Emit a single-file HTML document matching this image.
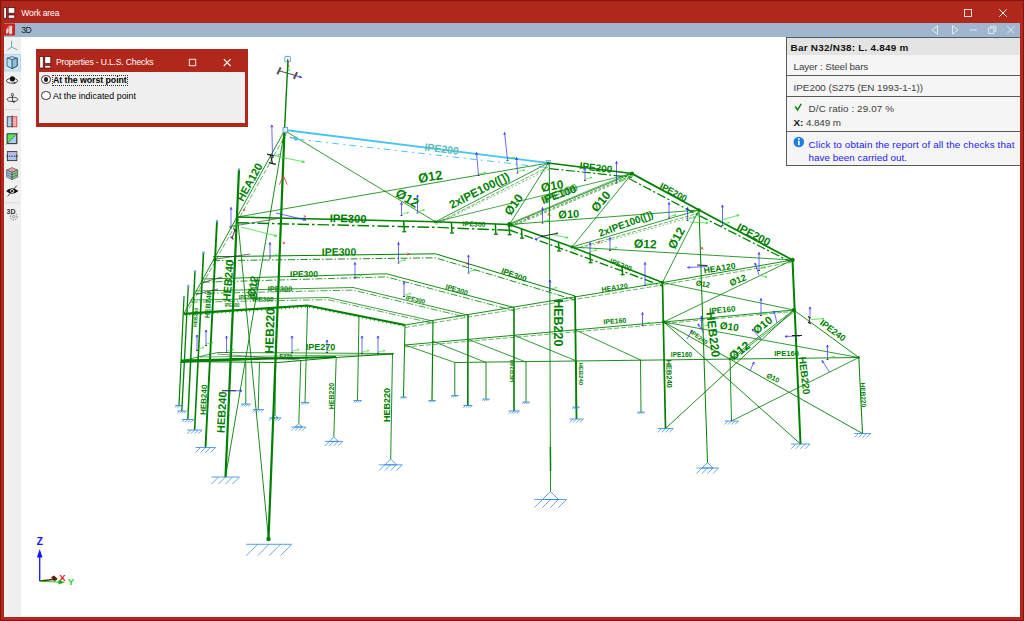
<!DOCTYPE html>
<html><head><meta charset="utf-8"><title>Work area</title>
<style>
html,body{margin:0;padding:0;}
body{width:1024px;height:621px;overflow:hidden;background:#b0271b;position:relative;font-family:"Liberation Sans",sans-serif;color:#000;}
.abs{position:absolute;}
#frame{left:0;top:0;width:1022px;height:619px;border:1px solid #8a120c;background:#b0271b;}
#title{left:1px;top:1px;width:1022px;height:22px;background:#b0271b;color:#fff;}
#title .t{left:20.3px;top:5.6px;font-size:8.6px;line-height:12px;white-space:nowrap;letter-spacing:-0.165px;}
#bar{left:3.7px;top:22.5px;width:1016.5px;height:14.5px;background:#9fb6ce;}
#bar .t{left:17.6px;top:1.7px;font-size:8.6px;line-height:12px;color:#1a1a1a;letter-spacing:-0.5px;}
#tool{left:3.7px;top:37px;width:17px;height:580px;background:#f0f0f0;}
#canvas{left:21px;top:37px;width:999px;height:580px;background:#fff;}
svg{position:absolute;left:0;top:0;}
#dlg{left:35.7px;top:49.3px;width:212.8px;height:77.5px;background:#b0271b;}
#dlg .c{left:3px;top:23px;width:206px;height:51px;background:#f0f0f0;}
#dlg .t{left:20.3px;top:7.1px;color:#fff;font-size:8.6px;line-height:12px;white-space:nowrap;letter-spacing:-0.163px;}
.rb{width:7.6px;height:7.6px;border:1px solid #333;border-radius:50%;background:#fff;}
.lbl{font-size:8.8px;line-height:12px;white-space:nowrap;}
#info{left:786px;top:37px;width:234px;height:129px;background:#f5f5f5;border-left:1px solid #5a5a5a;border-top:1px solid #5a5a5a;border-bottom:1px solid #5a5a5a;box-sizing:border-box;}
#info .h{left:0;top:0;width:233px;height:17px;background:#e4e4e4;}
#info .sep{left:0;width:233px;height:1px;background:#5a5a5a;}
#info .t{font-size:9.9px;line-height:12px;white-space:nowrap;color:#404040;}
</style></head><body>
<div id="frame" class="abs"></div>
<div id="title" class="abs"><div class="t abs" id="tt">Work area</div></div>
<div id="bar" class="abs"><div class="t abs">3D</div></div>
<div id="tool" class="abs"></div>
<div id="canvas" class="abs"></div>
<svg width="1024" height="621" viewBox="0 0 1024 621" font-family="Liberation Sans, sans-serif">
<polyline points="213.0,256.7 435.5,253.8 575.0,296.0" fill="none" stroke="#008000" stroke-width="1.0"/>
<polyline points="213.0,260.7 435.5,257.8 575.0,300.0" fill="none" stroke="#008000" stroke-width="0.9" stroke-dasharray="7 2 1.5 2"/>
<polyline points="203.0,279.0 386.5,273.8 514.0,307.5" fill="none" stroke="#008000" stroke-width="0.9"/>
<polyline points="203.0,282.2 386.5,276.9 514.0,310.7" fill="none" stroke="#008000" stroke-width="0.81" stroke-dasharray="7 2 1.5 2"/>
<polyline points="195.5,291.0 353.0,287.5 467.8,315.0" fill="none" stroke="#008000" stroke-width="0.8"/>
<polyline points="195.5,293.6 353.0,290.1 467.8,317.6" fill="none" stroke="#008000" stroke-width="0.7200000000000001" stroke-dasharray="7 2 1.5 2"/>
<polyline points="190.5,300.0 328.0,297.5 432.8,321.0" fill="none" stroke="#008000" stroke-width="0.75"/>
<polyline points="190.5,302.2 328.0,299.7 432.8,323.2" fill="none" stroke="#008000" stroke-width="0.675" stroke-dasharray="7 2 1.5 2"/>
<polyline points="183.8,313.8 307.5,305.5 405.0,325.0" fill="none" stroke="#008000" stroke-width="2.2"/>
<line x1="185.7" y1="313.6" x2="185.7" y2="315.8" stroke="#008000" stroke-width="0.7"/>
<line x1="189.7" y1="313.4" x2="189.7" y2="315.6" stroke="#008000" stroke-width="0.7"/>
<line x1="193.7" y1="313.1" x2="193.7" y2="315.3" stroke="#008000" stroke-width="0.7"/>
<line x1="197.7" y1="312.8" x2="197.7" y2="315.0" stroke="#008000" stroke-width="0.7"/>
<line x1="201.7" y1="312.6" x2="201.7" y2="314.8" stroke="#008000" stroke-width="0.7"/>
<line x1="205.7" y1="312.3" x2="205.7" y2="314.5" stroke="#008000" stroke-width="0.7"/>
<line x1="209.7" y1="312.0" x2="209.7" y2="314.2" stroke="#008000" stroke-width="0.7"/>
<line x1="213.7" y1="311.8" x2="213.7" y2="314.0" stroke="#008000" stroke-width="0.7"/>
<line x1="217.7" y1="311.5" x2="217.7" y2="313.7" stroke="#008000" stroke-width="0.7"/>
<line x1="221.7" y1="311.2" x2="221.7" y2="313.4" stroke="#008000" stroke-width="0.7"/>
<line x1="225.7" y1="311.0" x2="225.7" y2="313.2" stroke="#008000" stroke-width="0.7"/>
<line x1="229.7" y1="310.7" x2="229.7" y2="312.9" stroke="#008000" stroke-width="0.7"/>
<line x1="233.6" y1="310.4" x2="233.6" y2="312.6" stroke="#008000" stroke-width="0.7"/>
<line x1="237.6" y1="310.2" x2="237.6" y2="312.4" stroke="#008000" stroke-width="0.7"/>
<line x1="241.6" y1="309.9" x2="241.6" y2="312.1" stroke="#008000" stroke-width="0.7"/>
<line x1="245.6" y1="309.6" x2="245.6" y2="311.8" stroke="#008000" stroke-width="0.7"/>
<line x1="249.6" y1="309.4" x2="249.6" y2="311.6" stroke="#008000" stroke-width="0.7"/>
<line x1="253.6" y1="309.1" x2="253.6" y2="311.3" stroke="#008000" stroke-width="0.7"/>
<line x1="257.6" y1="308.8" x2="257.6" y2="311.0" stroke="#008000" stroke-width="0.7"/>
<line x1="261.6" y1="308.6" x2="261.6" y2="310.8" stroke="#008000" stroke-width="0.7"/>
<line x1="265.6" y1="308.3" x2="265.6" y2="310.5" stroke="#008000" stroke-width="0.7"/>
<line x1="269.6" y1="308.0" x2="269.6" y2="310.2" stroke="#008000" stroke-width="0.7"/>
<line x1="273.6" y1="307.8" x2="273.6" y2="310.0" stroke="#008000" stroke-width="0.7"/>
<line x1="277.6" y1="307.5" x2="277.6" y2="309.7" stroke="#008000" stroke-width="0.7"/>
<line x1="281.6" y1="307.2" x2="281.6" y2="309.4" stroke="#008000" stroke-width="0.7"/>
<line x1="285.5" y1="307.0" x2="285.5" y2="309.2" stroke="#008000" stroke-width="0.7"/>
<line x1="289.5" y1="306.7" x2="289.5" y2="308.9" stroke="#008000" stroke-width="0.7"/>
<line x1="293.5" y1="306.4" x2="293.5" y2="308.6" stroke="#008000" stroke-width="0.7"/>
<line x1="297.5" y1="306.2" x2="297.5" y2="308.4" stroke="#008000" stroke-width="0.7"/>
<line x1="301.5" y1="305.9" x2="301.5" y2="308.1" stroke="#008000" stroke-width="0.7"/>
<line x1="305.5" y1="305.6" x2="305.5" y2="307.8" stroke="#008000" stroke-width="0.7"/>
<line x1="309.5" y1="305.9" x2="309.5" y2="308.1" stroke="#008000" stroke-width="0.7"/>
<line x1="313.6" y1="306.7" x2="313.6" y2="308.9" stroke="#008000" stroke-width="0.7"/>
<line x1="317.7" y1="307.5" x2="317.7" y2="309.7" stroke="#008000" stroke-width="0.7"/>
<line x1="321.7" y1="308.3" x2="321.7" y2="310.5" stroke="#008000" stroke-width="0.7"/>
<line x1="325.8" y1="309.2" x2="325.8" y2="311.4" stroke="#008000" stroke-width="0.7"/>
<line x1="329.8" y1="310.0" x2="329.8" y2="312.2" stroke="#008000" stroke-width="0.7"/>
<line x1="333.9" y1="310.8" x2="333.9" y2="313.0" stroke="#008000" stroke-width="0.7"/>
<line x1="338.0" y1="311.6" x2="338.0" y2="313.8" stroke="#008000" stroke-width="0.7"/>
<line x1="342.0" y1="312.4" x2="342.0" y2="314.6" stroke="#008000" stroke-width="0.7"/>
<line x1="346.1" y1="313.2" x2="346.1" y2="315.4" stroke="#008000" stroke-width="0.7"/>
<line x1="350.2" y1="314.0" x2="350.2" y2="316.2" stroke="#008000" stroke-width="0.7"/>
<line x1="354.2" y1="314.8" x2="354.2" y2="317.0" stroke="#008000" stroke-width="0.7"/>
<line x1="358.3" y1="315.7" x2="358.3" y2="317.9" stroke="#008000" stroke-width="0.7"/>
<line x1="362.3" y1="316.5" x2="362.3" y2="318.7" stroke="#008000" stroke-width="0.7"/>
<line x1="366.4" y1="317.3" x2="366.4" y2="319.5" stroke="#008000" stroke-width="0.7"/>
<line x1="370.5" y1="318.1" x2="370.5" y2="320.3" stroke="#008000" stroke-width="0.7"/>
<line x1="374.5" y1="318.9" x2="374.5" y2="321.1" stroke="#008000" stroke-width="0.7"/>
<line x1="378.6" y1="319.7" x2="378.6" y2="321.9" stroke="#008000" stroke-width="0.7"/>
<line x1="382.7" y1="320.5" x2="382.7" y2="322.7" stroke="#008000" stroke-width="0.7"/>
<line x1="386.7" y1="321.3" x2="386.7" y2="323.5" stroke="#008000" stroke-width="0.7"/>
<line x1="390.8" y1="322.2" x2="390.8" y2="324.4" stroke="#008000" stroke-width="0.7"/>
<line x1="394.8" y1="323.0" x2="394.8" y2="325.2" stroke="#008000" stroke-width="0.7"/>
<line x1="398.9" y1="323.8" x2="398.9" y2="326.0" stroke="#008000" stroke-width="0.7"/>
<line x1="403.0" y1="324.6" x2="403.0" y2="326.8" stroke="#008000" stroke-width="0.7"/>
<line x1="405.0" y1="325.0" x2="662.5" y2="282.5" stroke="#008000" stroke-width="0.9"/>
<line x1="405.0" y1="327.5" x2="662.5" y2="285.0" stroke="#008000" stroke-width="0.6" stroke-dasharray="5 2"/>
<line x1="405.0" y1="345.0" x2="663.8" y2="322.0" stroke="#008000" stroke-width="0.9"/>
<line x1="405.0" y1="347.0" x2="663.8" y2="324.0" stroke="#008000" stroke-width="0.6" stroke-dasharray="5 2"/>
<line x1="284.5" y1="130.5" x2="183.8" y2="313.8" stroke="#008000" stroke-width="0.9"/>
<line x1="286.5" y1="133.0" x2="186.0" y2="314.0" stroke="#008000" stroke-width="0.6" stroke-dasharray="5 2"/>
<line x1="405.0" y1="325.0" x2="403.5" y2="397.0" stroke="#008000" stroke-width="1.0"/>
<line x1="400.5" y1="397.0" x2="406.5" y2="397.0" stroke="#2f86de" stroke-width="0.8"/>
<line x1="402.0" y1="397.0" x2="400.5" y2="398.5" stroke="#2f86de" stroke-width="0.7200000000000001"/>
<line x1="403.5" y1="397.0" x2="402.0" y2="398.5" stroke="#2f86de" stroke-width="0.7200000000000001"/>
<line x1="405.0" y1="397.0" x2="403.5" y2="398.5" stroke="#2f86de" stroke-width="0.7200000000000001"/>
<line x1="406.5" y1="397.0" x2="405.0" y2="398.5" stroke="#2f86de" stroke-width="0.7200000000000001"/>
<line x1="433.0" y1="321.0" x2="432.0" y2="400.5" stroke="#008000" stroke-width="1.2"/>
<line x1="428.4" y1="400.5" x2="435.6" y2="400.5" stroke="#2f86de" stroke-width="0.8"/>
<line x1="430.2" y1="400.5" x2="428.4" y2="402.3" stroke="#2f86de" stroke-width="0.7200000000000001"/>
<line x1="432.0" y1="400.5" x2="430.2" y2="402.3" stroke="#2f86de" stroke-width="0.7200000000000001"/>
<line x1="433.8" y1="400.5" x2="432.0" y2="402.3" stroke="#2f86de" stroke-width="0.7200000000000001"/>
<line x1="435.6" y1="400.5" x2="433.8" y2="402.3" stroke="#2f86de" stroke-width="0.7200000000000001"/>
<line x1="468.0" y1="315.0" x2="467.8" y2="405.5" stroke="#008000" stroke-width="1.6"/>
<line x1="463.3" y1="405.5" x2="472.2" y2="405.5" stroke="#2f86de" stroke-width="0.8"/>
<line x1="465.5" y1="405.5" x2="463.3" y2="407.7" stroke="#2f86de" stroke-width="0.7200000000000001"/>
<line x1="467.8" y1="405.5" x2="465.5" y2="407.7" stroke="#2f86de" stroke-width="0.7200000000000001"/>
<line x1="470.0" y1="405.5" x2="467.8" y2="407.7" stroke="#2f86de" stroke-width="0.7200000000000001"/>
<line x1="472.2" y1="405.5" x2="470.0" y2="407.7" stroke="#2f86de" stroke-width="0.7200000000000001"/>
<line x1="514.0" y1="307.5" x2="514.0" y2="411.0" stroke="#008000" stroke-width="1.6"/>
<line x1="508.6" y1="411.0" x2="519.5" y2="411.0" stroke="#2f86de" stroke-width="0.8"/>
<line x1="511.3" y1="411.0" x2="508.6" y2="413.7" stroke="#2f86de" stroke-width="0.7200000000000001"/>
<line x1="514.0" y1="411.0" x2="511.3" y2="413.7" stroke="#2f86de" stroke-width="0.7200000000000001"/>
<line x1="516.7" y1="411.0" x2="514.0" y2="413.7" stroke="#2f86de" stroke-width="0.7200000000000001"/>
<line x1="519.5" y1="411.0" x2="516.7" y2="413.7" stroke="#2f86de" stroke-width="0.7200000000000001"/>
<line x1="575.0" y1="296.0" x2="576.5" y2="419.0" stroke="#008000" stroke-width="1.8"/>
<line x1="569.6" y1="419.0" x2="583.4" y2="419.0" stroke="#2f86de" stroke-width="0.8"/>
<line x1="573.1" y1="419.0" x2="569.6" y2="422.4" stroke="#2f86de" stroke-width="0.7200000000000001"/>
<line x1="576.5" y1="419.0" x2="573.1" y2="422.4" stroke="#2f86de" stroke-width="0.7200000000000001"/>
<line x1="579.9" y1="419.0" x2="576.5" y2="422.4" stroke="#2f86de" stroke-width="0.7200000000000001"/>
<line x1="583.4" y1="419.0" x2="579.9" y2="422.4" stroke="#2f86de" stroke-width="0.7200000000000001"/>
<line x1="405.0" y1="345.0" x2="455.0" y2="362.5" stroke="#008000" stroke-width="0.8"/>
<line x1="432.8" y1="341.2" x2="486.0" y2="362.5" stroke="#008000" stroke-width="0.8"/>
<line x1="468.5" y1="339.5" x2="526.0" y2="362.0" stroke="#008000" stroke-width="0.8"/>
<line x1="514.0" y1="335.3" x2="576.5" y2="361.0" stroke="#008000" stroke-width="0.8"/>
<line x1="575.5" y1="330.0" x2="641.5" y2="360.4" stroke="#008000" stroke-width="0.8"/>
<line x1="455.0" y1="362.5" x2="858.8" y2="357.5" stroke="#008000" stroke-width="0.9"/>
<line x1="454.8" y1="362.5" x2="454.8" y2="395.5" stroke="#008000" stroke-width="0.9"/>
<line x1="451.2" y1="395.5" x2="458.2" y2="395.5" stroke="#2f86de" stroke-width="0.8"/>
<line x1="453.0" y1="395.5" x2="451.2" y2="397.2" stroke="#2f86de" stroke-width="0.7200000000000001"/>
<line x1="454.8" y1="395.5" x2="453.0" y2="397.2" stroke="#2f86de" stroke-width="0.7200000000000001"/>
<line x1="456.5" y1="395.5" x2="454.8" y2="397.2" stroke="#2f86de" stroke-width="0.7200000000000001"/>
<line x1="458.2" y1="395.5" x2="456.5" y2="397.2" stroke="#2f86de" stroke-width="0.7200000000000001"/>
<line x1="486.0" y1="362.5" x2="486.0" y2="399.0" stroke="#008000" stroke-width="0.9"/>
<line x1="482.5" y1="399.0" x2="489.5" y2="399.0" stroke="#2f86de" stroke-width="0.8"/>
<line x1="484.2" y1="399.0" x2="482.5" y2="400.8" stroke="#2f86de" stroke-width="0.7200000000000001"/>
<line x1="486.0" y1="399.0" x2="484.2" y2="400.8" stroke="#2f86de" stroke-width="0.7200000000000001"/>
<line x1="487.8" y1="399.0" x2="486.0" y2="400.8" stroke="#2f86de" stroke-width="0.7200000000000001"/>
<line x1="489.5" y1="399.0" x2="487.8" y2="400.8" stroke="#2f86de" stroke-width="0.7200000000000001"/>
<line x1="526.0" y1="362.0" x2="526.0" y2="402.0" stroke="#008000" stroke-width="0.9"/>
<line x1="522.5" y1="402.0" x2="529.5" y2="402.0" stroke="#2f86de" stroke-width="0.8"/>
<line x1="524.2" y1="402.0" x2="522.5" y2="403.8" stroke="#2f86de" stroke-width="0.7200000000000001"/>
<line x1="526.0" y1="402.0" x2="524.2" y2="403.8" stroke="#2f86de" stroke-width="0.7200000000000001"/>
<line x1="527.8" y1="402.0" x2="526.0" y2="403.8" stroke="#2f86de" stroke-width="0.7200000000000001"/>
<line x1="529.5" y1="402.0" x2="527.8" y2="403.8" stroke="#2f86de" stroke-width="0.7200000000000001"/>
<line x1="576.5" y1="361.0" x2="576.0" y2="407.0" stroke="#008000" stroke-width="0.9"/>
<line x1="572.5" y1="407.0" x2="579.5" y2="407.0" stroke="#2f86de" stroke-width="0.8"/>
<line x1="574.2" y1="407.0" x2="572.5" y2="408.8" stroke="#2f86de" stroke-width="0.7200000000000001"/>
<line x1="576.0" y1="407.0" x2="574.2" y2="408.8" stroke="#2f86de" stroke-width="0.7200000000000001"/>
<line x1="577.8" y1="407.0" x2="576.0" y2="408.8" stroke="#2f86de" stroke-width="0.7200000000000001"/>
<line x1="579.5" y1="407.0" x2="577.8" y2="408.8" stroke="#2f86de" stroke-width="0.7200000000000001"/>
<line x1="640.5" y1="360.0" x2="641.0" y2="412.0" stroke="#008000" stroke-width="0.9"/>
<line x1="637.5" y1="412.0" x2="644.5" y2="412.0" stroke="#2f86de" stroke-width="0.8"/>
<line x1="639.2" y1="412.0" x2="637.5" y2="413.8" stroke="#2f86de" stroke-width="0.7200000000000001"/>
<line x1="641.0" y1="412.0" x2="639.2" y2="413.8" stroke="#2f86de" stroke-width="0.7200000000000001"/>
<line x1="642.8" y1="412.0" x2="641.0" y2="413.8" stroke="#2f86de" stroke-width="0.7200000000000001"/>
<line x1="644.5" y1="412.0" x2="642.8" y2="413.8" stroke="#2f86de" stroke-width="0.7200000000000001"/>
<line x1="307.5" y1="306.0" x2="305.0" y2="402.5" stroke="#008000" stroke-width="0.9"/>
<line x1="301.0" y1="402.5" x2="309.0" y2="402.5" stroke="#2f86de" stroke-width="0.8"/>
<line x1="303.0" y1="402.5" x2="301.0" y2="404.5" stroke="#2f86de" stroke-width="0.7200000000000001"/>
<line x1="305.0" y1="402.5" x2="303.0" y2="404.5" stroke="#2f86de" stroke-width="0.7200000000000001"/>
<line x1="307.0" y1="402.5" x2="305.0" y2="404.5" stroke="#2f86de" stroke-width="0.7200000000000001"/>
<line x1="309.0" y1="402.5" x2="307.0" y2="404.5" stroke="#2f86de" stroke-width="0.7200000000000001"/>
<line x1="359.0" y1="316.0" x2="357.5" y2="400.5" stroke="#008000" stroke-width="0.9"/>
<line x1="353.5" y1="400.5" x2="361.5" y2="400.5" stroke="#2f86de" stroke-width="0.8"/>
<line x1="355.5" y1="400.5" x2="353.5" y2="402.5" stroke="#2f86de" stroke-width="0.7200000000000001"/>
<line x1="357.5" y1="400.5" x2="355.5" y2="402.5" stroke="#2f86de" stroke-width="0.7200000000000001"/>
<line x1="359.5" y1="400.5" x2="357.5" y2="402.5" stroke="#2f86de" stroke-width="0.7200000000000001"/>
<line x1="361.5" y1="400.5" x2="359.5" y2="402.5" stroke="#2f86de" stroke-width="0.7200000000000001"/>
<polyline points="181.0,361.0 217.5,352.5 393.8,353.5" fill="none" stroke="#008000" stroke-width="0.8"/>
<polyline points="181.0,361.5 278.0,362.5 336.0,357.5 393.8,353.8" fill="none" stroke="#008000" stroke-width="1.0"/>
<line x1="181.0" y1="360.6" x2="336.0" y2="357.0" stroke="#008000" stroke-width="2.2"/>
<line x1="200.0" y1="357.0" x2="393.0" y2="354.5" stroke="#008000" stroke-width="0.6"/>
<line x1="230.0" y1="358.5" x2="300.0" y2="358.0" stroke="#008000" stroke-width="1.2"/>
<line x1="217.0" y1="354.0" x2="300.0" y2="360.0" stroke="#404040" stroke-width="0.6"/>
<line x1="181.0" y1="362.5" x2="260.0" y2="359.0" stroke="#008000" stroke-width="1.2"/>
<line x1="245.8" y1="362.0" x2="245.8" y2="404.0" stroke="#008000" stroke-width="0.9"/>
<line x1="241.0" y1="404.0" x2="250.5" y2="404.0" stroke="#2f86de" stroke-width="0.8"/>
<line x1="243.4" y1="404.0" x2="241.0" y2="406.4" stroke="#2f86de" stroke-width="0.7200000000000001"/>
<line x1="245.8" y1="404.0" x2="243.4" y2="406.4" stroke="#2f86de" stroke-width="0.7200000000000001"/>
<line x1="248.1" y1="404.0" x2="245.8" y2="406.4" stroke="#2f86de" stroke-width="0.7200000000000001"/>
<line x1="250.5" y1="404.0" x2="248.1" y2="406.4" stroke="#2f86de" stroke-width="0.7200000000000001"/>
<line x1="259.5" y1="362.0" x2="258.2" y2="409.5" stroke="#008000" stroke-width="0.9"/>
<line x1="252.8" y1="409.5" x2="263.7" y2="409.5" stroke="#2f86de" stroke-width="0.8"/>
<line x1="255.5" y1="409.5" x2="252.8" y2="412.2" stroke="#2f86de" stroke-width="0.7200000000000001"/>
<line x1="258.2" y1="409.5" x2="255.5" y2="412.2" stroke="#2f86de" stroke-width="0.7200000000000001"/>
<line x1="261.0" y1="409.5" x2="258.2" y2="412.2" stroke="#2f86de" stroke-width="0.7200000000000001"/>
<line x1="263.7" y1="409.5" x2="261.0" y2="412.2" stroke="#2f86de" stroke-width="0.7200000000000001"/>
<line x1="275.5" y1="362.0" x2="275.0" y2="414.8" stroke="#008000" stroke-width="0.9"/>
<polyline points="275.0,414.8 271.9,417.9 278.1,417.9 275.0,414.8" fill="none" stroke="#2f86de" stroke-width="0.8"/>
<line x1="268.9" y1="417.9" x2="281.1" y2="417.9" stroke="#2f86de" stroke-width="0.8"/>
<line x1="271.9" y1="417.9" x2="268.9" y2="420.9" stroke="#2f86de" stroke-width="0.7200000000000001"/>
<line x1="275.0" y1="417.9" x2="271.9" y2="420.9" stroke="#2f86de" stroke-width="0.7200000000000001"/>
<line x1="278.0" y1="417.9" x2="275.0" y2="420.9" stroke="#2f86de" stroke-width="0.7200000000000001"/>
<line x1="281.1" y1="417.9" x2="278.0" y2="420.9" stroke="#2f86de" stroke-width="0.7200000000000001"/>
<line x1="300.8" y1="360.0" x2="298.8" y2="423.4" stroke="#008000" stroke-width="0.9"/>
<polyline points="298.8,423.4 295.2,427.0 302.3,427.0 298.8,423.4" fill="none" stroke="#2f86de" stroke-width="0.8"/>
<line x1="291.6" y1="427.0" x2="305.9" y2="427.0" stroke="#2f86de" stroke-width="0.8"/>
<line x1="295.2" y1="427.0" x2="291.6" y2="430.6" stroke="#2f86de" stroke-width="0.7200000000000001"/>
<line x1="298.8" y1="427.0" x2="295.2" y2="430.6" stroke="#2f86de" stroke-width="0.7200000000000001"/>
<line x1="302.3" y1="427.0" x2="298.8" y2="430.6" stroke="#2f86de" stroke-width="0.7200000000000001"/>
<line x1="305.9" y1="427.0" x2="302.3" y2="430.6" stroke="#2f86de" stroke-width="0.7200000000000001"/>
<line x1="336.2" y1="357.5" x2="333.8" y2="437.0" stroke="#008000" stroke-width="0.9"/>
<polyline points="333.8,437.0 329.4,441.4 338.2,441.4 333.8,437.0" fill="none" stroke="#2f86de" stroke-width="0.8"/>
<line x1="324.9" y1="441.4" x2="342.7" y2="441.4" stroke="#2f86de" stroke-width="0.8"/>
<line x1="329.4" y1="441.4" x2="324.9" y2="445.9" stroke="#2f86de" stroke-width="0.7200000000000001"/>
<line x1="333.8" y1="441.4" x2="329.4" y2="445.9" stroke="#2f86de" stroke-width="0.7200000000000001"/>
<line x1="338.2" y1="441.4" x2="333.8" y2="445.9" stroke="#2f86de" stroke-width="0.7200000000000001"/>
<line x1="342.7" y1="441.4" x2="338.2" y2="445.9" stroke="#2f86de" stroke-width="0.7200000000000001"/>
<line x1="392.5" y1="353.8" x2="390.7" y2="459.0" stroke="#008000" stroke-width="0.9"/>
<polyline points="390.7,459.0 384.9,464.8 396.5,464.8 390.7,459.0" fill="none" stroke="#2f86de" stroke-width="0.8"/>
<line x1="379.1" y1="464.8" x2="402.3" y2="464.8" stroke="#2f86de" stroke-width="0.8"/>
<line x1="384.9" y1="464.8" x2="379.1" y2="470.6" stroke="#2f86de" stroke-width="0.7200000000000001"/>
<line x1="390.7" y1="464.8" x2="384.9" y2="470.6" stroke="#2f86de" stroke-width="0.7200000000000001"/>
<line x1="396.5" y1="464.8" x2="390.7" y2="470.6" stroke="#2f86de" stroke-width="0.7200000000000001"/>
<line x1="402.3" y1="464.8" x2="396.5" y2="470.6" stroke="#2f86de" stroke-width="0.7200000000000001"/>
<line x1="239.0" y1="169.5" x2="225.5" y2="477.0" stroke="#008000" stroke-width="2.2"/>
<line x1="211.5" y1="477.0" x2="239.5" y2="477.0" stroke="#2f86de" stroke-width="0.8"/>
<line x1="218.5" y1="477.0" x2="211.5" y2="484.0" stroke="#2f86de" stroke-width="0.7200000000000001"/>
<line x1="225.5" y1="477.0" x2="218.5" y2="484.0" stroke="#2f86de" stroke-width="0.7200000000000001"/>
<line x1="232.5" y1="477.0" x2="225.5" y2="484.0" stroke="#2f86de" stroke-width="0.7200000000000001"/>
<line x1="239.5" y1="477.0" x2="232.5" y2="484.0" stroke="#2f86de" stroke-width="0.7200000000000001"/>
<circle cx="239" cy="169.5" r="1.3" fill="#6fa8e6"/>
<line x1="217.0" y1="221.0" x2="205.5" y2="447.5" stroke="#008000" stroke-width="1.9"/>
<line x1="195.5" y1="447.5" x2="215.5" y2="447.5" stroke="#2f86de" stroke-width="0.8"/>
<line x1="200.5" y1="447.5" x2="195.5" y2="452.5" stroke="#2f86de" stroke-width="0.7200000000000001"/>
<line x1="205.5" y1="447.5" x2="200.5" y2="452.5" stroke="#2f86de" stroke-width="0.7200000000000001"/>
<line x1="210.5" y1="447.5" x2="205.5" y2="452.5" stroke="#2f86de" stroke-width="0.7200000000000001"/>
<line x1="215.5" y1="447.5" x2="210.5" y2="452.5" stroke="#2f86de" stroke-width="0.7200000000000001"/>
<circle cx="217" cy="221" r="1.3" fill="#6fa8e6"/>
<line x1="203.5" y1="252.5" x2="194.6" y2="430.0" stroke="#008000" stroke-width="1.6"/>
<line x1="187.1" y1="430.0" x2="202.1" y2="430.0" stroke="#2f86de" stroke-width="0.8"/>
<line x1="190.8" y1="430.0" x2="187.1" y2="433.8" stroke="#2f86de" stroke-width="0.7200000000000001"/>
<line x1="194.6" y1="430.0" x2="190.8" y2="433.8" stroke="#2f86de" stroke-width="0.7200000000000001"/>
<line x1="198.3" y1="430.0" x2="194.6" y2="433.8" stroke="#2f86de" stroke-width="0.7200000000000001"/>
<line x1="202.1" y1="430.0" x2="198.3" y2="433.8" stroke="#2f86de" stroke-width="0.7200000000000001"/>
<circle cx="203.5" cy="252.5" r="1.3" fill="#6fa8e6"/>
<line x1="195.0" y1="271.5" x2="187.8" y2="419.5" stroke="#008000" stroke-width="1.5"/>
<line x1="181.8" y1="419.5" x2="193.8" y2="419.5" stroke="#2f86de" stroke-width="0.8"/>
<line x1="184.8" y1="419.5" x2="181.8" y2="422.5" stroke="#2f86de" stroke-width="0.7200000000000001"/>
<line x1="187.8" y1="419.5" x2="184.8" y2="422.5" stroke="#2f86de" stroke-width="0.7200000000000001"/>
<line x1="190.8" y1="419.5" x2="187.8" y2="422.5" stroke="#2f86de" stroke-width="0.7200000000000001"/>
<line x1="193.8" y1="419.5" x2="190.8" y2="422.5" stroke="#2f86de" stroke-width="0.7200000000000001"/>
<circle cx="195" cy="271.5" r="1.3" fill="#6fa8e6"/>
<line x1="188.3" y1="286.0" x2="181.8" y2="411.0" stroke="#008000" stroke-width="1.3"/>
<line x1="177.3" y1="411.0" x2="186.3" y2="411.0" stroke="#2f86de" stroke-width="0.8"/>
<line x1="179.6" y1="411.0" x2="177.3" y2="413.2" stroke="#2f86de" stroke-width="0.7200000000000001"/>
<line x1="181.8" y1="411.0" x2="179.6" y2="413.2" stroke="#2f86de" stroke-width="0.7200000000000001"/>
<line x1="184.1" y1="411.0" x2="181.8" y2="413.2" stroke="#2f86de" stroke-width="0.7200000000000001"/>
<line x1="186.3" y1="411.0" x2="184.1" y2="413.2" stroke="#2f86de" stroke-width="0.7200000000000001"/>
<circle cx="188.3" cy="286" r="1.3" fill="#6fa8e6"/>
<line x1="184.0" y1="297.0" x2="179.0" y2="405.5" stroke="#008000" stroke-width="1.2"/>
<line x1="175.2" y1="405.5" x2="182.8" y2="405.5" stroke="#2f86de" stroke-width="0.8"/>
<line x1="177.1" y1="405.5" x2="175.2" y2="407.4" stroke="#2f86de" stroke-width="0.7200000000000001"/>
<line x1="179.0" y1="405.5" x2="177.1" y2="407.4" stroke="#2f86de" stroke-width="0.7200000000000001"/>
<line x1="180.9" y1="405.5" x2="179.0" y2="407.4" stroke="#2f86de" stroke-width="0.7200000000000001"/>
<line x1="182.8" y1="405.5" x2="180.9" y2="407.4" stroke="#2f86de" stroke-width="0.7200000000000001"/>
<circle cx="184" cy="297" r="1.3" fill="#6fa8e6"/>
<line x1="229.0" y1="226.8" x2="281.0" y2="218.0" stroke="#333" stroke-width="0.7"/>
<line x1="213.0" y1="259.5" x2="250.0" y2="254.0" stroke="#333" stroke-width="0.7"/>
<line x1="203.0" y1="282.5" x2="222.0" y2="277.0" stroke="#333" stroke-width="0.7"/>
<line x1="196.0" y1="294.5" x2="218.0" y2="289.0" stroke="#333" stroke-width="0.7"/>
<polyline points="237.5,217.0 435.5,221.8 509.5,224.5 572.0,247.0 662.5,282.5" fill="none" stroke="#008000" stroke-width="1.5"/>
<polyline points="237.5,222.8 435.0,227.3 509.5,230.3" fill="none" stroke="#008000" stroke-width="1.45" stroke-dasharray="11.5 3 2.5 3"/>
<polyline points="509.5,230.0 572.0,252.5 662.5,286.0" fill="none" stroke="#008000" stroke-width="1.35" stroke-dasharray="9 2.5 2 2.5"/>
<line x1="403.7" y1="221.0" x2="404.3" y2="231.5" stroke="#008000" stroke-width="1.5"/>
<line x1="402.3" y1="231.7" x2="406.3" y2="231.7" stroke="#008000" stroke-width="1.3"/>
<line x1="451.4" y1="222.3" x2="452.0" y2="232.8" stroke="#008000" stroke-width="1.5"/>
<line x1="450.0" y1="233.0" x2="454.0" y2="233.0" stroke="#008000" stroke-width="1.3"/>
<line x1="495.3" y1="224.0" x2="495.9" y2="234.0" stroke="#008000" stroke-width="1.5"/>
<line x1="493.9" y1="234.2" x2="497.9" y2="234.2" stroke="#008000" stroke-width="1.3"/>
<line x1="509.0" y1="225.0" x2="509.6" y2="234.5" stroke="#008000" stroke-width="1.5"/>
<line x1="507.6" y1="234.7" x2="511.6" y2="234.7" stroke="#008000" stroke-width="1.3"/>
<line x1="521.5" y1="229.0" x2="522.1" y2="238.0" stroke="#008000" stroke-width="1.5"/>
<line x1="520.1" y1="238.2" x2="524.1" y2="238.2" stroke="#008000" stroke-width="1.3"/>
<line x1="558.5" y1="242.3" x2="559.1" y2="250.8" stroke="#008000" stroke-width="1.5"/>
<line x1="557.1" y1="251.0" x2="561.1" y2="251.0" stroke="#008000" stroke-width="1.3"/>
<line x1="590.0" y1="254.5" x2="590.6" y2="262.5" stroke="#008000" stroke-width="1.5"/>
<line x1="588.6" y1="262.7" x2="592.6" y2="262.7" stroke="#008000" stroke-width="1.3"/>
<line x1="622.0" y1="267.0" x2="622.6" y2="274.5" stroke="#008000" stroke-width="1.5"/>
<line x1="620.6" y1="274.7" x2="624.6" y2="274.7" stroke="#008000" stroke-width="1.3"/>
<line x1="548.3" y1="163.0" x2="632.0" y2="173.6" stroke="#008000" stroke-width="1.5"/>
<line x1="550.0" y1="168.6" x2="632.0" y2="177.3" stroke="#008000" stroke-width="1.2" stroke-dasharray="9 2.5 2 2.5"/>
<polyline points="632.0,173.6 699.0,210.0 792.5,260.0" fill="none" stroke="#008000" stroke-width="1.8"/>
<polyline points="629.0,178.5 697.0,214.5 790.0,261.5" fill="none" stroke="#008000" stroke-width="1.3" stroke-dasharray="9 2.5 2 2.5"/>
<line x1="237.5" y1="217.0" x2="548.3" y2="163.0" stroke="#008000" stroke-width="0.8"/>
<line x1="284.5" y1="130.5" x2="435.5" y2="221.8" stroke="#008000" stroke-width="0.8"/>
<line x1="435.5" y1="221.8" x2="548.3" y2="163.0" stroke="#008000" stroke-width="0.8"/>
<line x1="437.0" y1="223.0" x2="548.0" y2="167.0" stroke="#008000" stroke-width="0.6" stroke-dasharray="4 1.5"/>
<line x1="436.0" y1="224.5" x2="549.0" y2="169.0" stroke="#008000" stroke-width="0.5" stroke-dasharray="2 2"/>
<line x1="435.5" y1="221.8" x2="632.0" y2="173.6" stroke="#008000" stroke-width="0.7"/>
<line x1="509.5" y1="224.5" x2="548.3" y2="163.0" stroke="#008000" stroke-width="0.8"/>
<line x1="509.5" y1="224.5" x2="632.0" y2="173.6" stroke="#008000" stroke-width="0.8"/>
<line x1="511.0" y1="225.6" x2="633.0" y2="174.8" stroke="#008000" stroke-width="0.7" stroke-dasharray="3 1.5"/>
<line x1="511.0" y1="226.8" x2="633.0" y2="176.2" stroke="#008000" stroke-width="0.6" stroke-dasharray="3 1.5"/>
<line x1="510.0" y1="223.4" x2="631.0" y2="172.8" stroke="#008000" stroke-width="0.6"/>
<line x1="509.5" y1="224.5" x2="699.0" y2="210.0" stroke="#008000" stroke-width="0.8"/>
<line x1="572.0" y1="247.0" x2="632.0" y2="173.6" stroke="#008000" stroke-width="0.8"/>
<line x1="572.0" y1="247.0" x2="699.0" y2="210.0" stroke="#008000" stroke-width="0.8"/>
<line x1="574.0" y1="249.0" x2="699.0" y2="213.0" stroke="#008000" stroke-width="0.6" stroke-dasharray="4 1.5"/>
<line x1="574.0" y1="250.5" x2="699.0" y2="215.0" stroke="#008000" stroke-width="0.5" stroke-dasharray="2 2"/>
<line x1="572.0" y1="247.0" x2="792.5" y2="260.0" stroke="#008000" stroke-width="0.8"/>
<line x1="662.5" y1="282.5" x2="699.0" y2="210.0" stroke="#008000" stroke-width="0.8"/>
<line x1="662.5" y1="282.5" x2="792.5" y2="260.0" stroke="#008000" stroke-width="0.9"/>
<line x1="664.0" y1="284.5" x2="791.0" y2="262.5" stroke="#008000" stroke-width="0.6" stroke-dasharray="5 2"/>
<line x1="792.5" y1="260.0" x2="663.8" y2="322.0" stroke="#008000" stroke-width="0.8"/>
<line x1="662.5" y1="282.5" x2="793.8" y2="310.0" stroke="#008000" stroke-width="0.8"/>
<line x1="663.8" y1="322.0" x2="793.8" y2="310.0" stroke="#008000" stroke-width="0.9"/>
<line x1="665.0" y1="323.5" x2="792.0" y2="311.5" stroke="#008000" stroke-width="0.6" stroke-dasharray="5 2"/>
<line x1="793.8" y1="310.0" x2="858.8" y2="357.5" stroke="#008000" stroke-width="0.9"/>
<line x1="663.8" y1="322.0" x2="858.8" y2="357.5" stroke="#008000" stroke-width="0.8"/>
<line x1="730.0" y1="358.8" x2="793.8" y2="310.0" stroke="#008000" stroke-width="0.8"/>
<line x1="731.5" y1="359.5" x2="794.5" y2="311.5" stroke="#008000" stroke-width="0.7"/>
<line x1="663.8" y1="322.0" x2="862.5" y2="433.5" stroke="#008000" stroke-width="0.9"/>
<line x1="663.8" y1="322.0" x2="800.5" y2="444.0" stroke="#008000" stroke-width="0.9"/>
<line x1="793.8" y1="310.0" x2="665.5" y2="428.5" stroke="#008000" stroke-width="0.9"/>
<line x1="858.8" y1="357.5" x2="731.5" y2="421.0" stroke="#008000" stroke-width="0.8"/>
<line x1="662.5" y1="282.5" x2="665.5" y2="428.5" stroke="#008000" stroke-width="1.7"/>
<line x1="657.8" y1="428.5" x2="673.2" y2="428.5" stroke="#2f86de" stroke-width="0.8"/>
<line x1="661.6" y1="428.5" x2="657.8" y2="432.4" stroke="#2f86de" stroke-width="0.7200000000000001"/>
<line x1="665.5" y1="428.5" x2="661.6" y2="432.4" stroke="#2f86de" stroke-width="0.7200000000000001"/>
<line x1="669.4" y1="428.5" x2="665.5" y2="432.4" stroke="#2f86de" stroke-width="0.7200000000000001"/>
<line x1="673.2" y1="428.5" x2="669.4" y2="432.4" stroke="#2f86de" stroke-width="0.7200000000000001"/>
<line x1="699.0" y1="210.0" x2="707.5" y2="462.5" stroke="#008000" stroke-width="1.0"/>
<polyline points="707.5,462.5 702.0,468.0 713.0,468.0 707.5,462.5" fill="none" stroke="#2f86de" stroke-width="0.8"/>
<line x1="696.5" y1="468.0" x2="718.5" y2="468.0" stroke="#2f86de" stroke-width="0.8"/>
<line x1="702.0" y1="468.0" x2="696.5" y2="473.5" stroke="#2f86de" stroke-width="0.7200000000000001"/>
<line x1="707.5" y1="468.0" x2="702.0" y2="473.5" stroke="#2f86de" stroke-width="0.7200000000000001"/>
<line x1="713.0" y1="468.0" x2="707.5" y2="473.5" stroke="#2f86de" stroke-width="0.7200000000000001"/>
<line x1="718.5" y1="468.0" x2="713.0" y2="473.5" stroke="#2f86de" stroke-width="0.7200000000000001"/>
<line x1="792.5" y1="260.0" x2="800.5" y2="444.0" stroke="#008000" stroke-width="2.0"/>
<line x1="791.0" y1="444.0" x2="810.0" y2="444.0" stroke="#2f86de" stroke-width="0.8"/>
<line x1="795.8" y1="444.0" x2="791.0" y2="448.8" stroke="#2f86de" stroke-width="0.7200000000000001"/>
<line x1="800.5" y1="444.0" x2="795.8" y2="448.8" stroke="#2f86de" stroke-width="0.7200000000000001"/>
<line x1="805.2" y1="444.0" x2="800.5" y2="448.8" stroke="#2f86de" stroke-width="0.7200000000000001"/>
<line x1="810.0" y1="444.0" x2="805.2" y2="448.8" stroke="#2f86de" stroke-width="0.7200000000000001"/>
<line x1="858.8" y1="357.5" x2="862.5" y2="433.5" stroke="#008000" stroke-width="1.0"/>
<line x1="854.2" y1="433.5" x2="870.8" y2="433.5" stroke="#2f86de" stroke-width="0.8"/>
<line x1="858.4" y1="433.5" x2="854.2" y2="437.6" stroke="#2f86de" stroke-width="0.7200000000000001"/>
<line x1="862.5" y1="433.5" x2="858.4" y2="437.6" stroke="#2f86de" stroke-width="0.7200000000000001"/>
<line x1="866.6" y1="433.5" x2="862.5" y2="437.6" stroke="#2f86de" stroke-width="0.7200000000000001"/>
<line x1="870.8" y1="433.5" x2="866.6" y2="437.6" stroke="#2f86de" stroke-width="0.7200000000000001"/>
<line x1="730.0" y1="358.8" x2="731.5" y2="421.0" stroke="#008000" stroke-width="0.9"/>
<line x1="724.5" y1="421.0" x2="738.5" y2="421.0" stroke="#2f86de" stroke-width="0.8"/>
<line x1="728.0" y1="421.0" x2="724.5" y2="424.5" stroke="#2f86de" stroke-width="0.7200000000000001"/>
<line x1="731.5" y1="421.0" x2="728.0" y2="424.5" stroke="#2f86de" stroke-width="0.7200000000000001"/>
<line x1="735.0" y1="421.0" x2="731.5" y2="424.5" stroke="#2f86de" stroke-width="0.7200000000000001"/>
<line x1="738.5" y1="421.0" x2="735.0" y2="424.5" stroke="#2f86de" stroke-width="0.7200000000000001"/>
<line x1="549.3" y1="164.0" x2="550.5" y2="491.5" stroke="#008000" stroke-width="0.9"/>
<polyline points="550.5,491.5 542.5,499.5 558.5,499.5 550.5,491.5" fill="none" stroke="#2f86de" stroke-width="0.8"/>
<line x1="534.5" y1="499.5" x2="566.5" y2="499.5" stroke="#2f86de" stroke-width="0.8"/>
<line x1="542.5" y1="499.5" x2="534.5" y2="507.5" stroke="#2f86de" stroke-width="0.7200000000000001"/>
<line x1="550.5" y1="499.5" x2="542.5" y2="507.5" stroke="#2f86de" stroke-width="0.7200000000000001"/>
<line x1="558.5" y1="499.5" x2="550.5" y2="507.5" stroke="#2f86de" stroke-width="0.7200000000000001"/>
<line x1="566.5" y1="499.5" x2="558.5" y2="507.5" stroke="#2f86de" stroke-width="0.7200000000000001"/>
<line x1="550.4" y1="447.0" x2="550.6" y2="471.0" stroke="#008000" stroke-width="1.4"/>
<line x1="284.5" y1="130.5" x2="225.5" y2="477.0" stroke="#008000" stroke-width="0.9"/>
<line x1="237.5" y1="217.0" x2="268.5" y2="539.0" stroke="#008000" stroke-width="0.9"/>
<line x1="274.0" y1="195.0" x2="249.0" y2="340.0" stroke="#008000" stroke-width="0.0"/>
<line x1="288.0" y1="59.0" x2="284.5" y2="130.5" stroke="#008000" stroke-width="1.4"/>
<line x1="284.5" y1="130.5" x2="268.5" y2="539.0" stroke="#008000" stroke-width="2.2"/>
<circle cx="268.5" cy="539" r="2.2" fill="#008000"/>
<line x1="246.2" y1="544.3" x2="291.8" y2="544.3" stroke="#2f86de" stroke-width="0.8"/>
<line x1="257.6" y1="544.3" x2="246.2" y2="555.7" stroke="#2f86de" stroke-width="0.7200000000000001"/>
<line x1="269.0" y1="544.3" x2="257.6" y2="555.7" stroke="#2f86de" stroke-width="0.7200000000000001"/>
<line x1="280.4" y1="544.3" x2="269.0" y2="555.7" stroke="#2f86de" stroke-width="0.7200000000000001"/>
<line x1="291.8" y1="544.3" x2="280.4" y2="555.7" stroke="#2f86de" stroke-width="0.7200000000000001"/>
<line x1="285.0" y1="130.0" x2="547.8" y2="162.8" stroke="#48c4f4" stroke-width="1.8"/>
<line x1="298.0" y1="139.3" x2="545.0" y2="167.4" stroke="#48c4f4" stroke-width="1.0" stroke-dasharray="6.5 4.5 1.8 4.5"/>
<circle cx="296" cy="138.6" r="2.2" fill="#48c4f4"/>
<line x1="289.5" y1="137.2" x2="294.0" y2="138.2" stroke="#8fa8b8" stroke-width="1.6"/>
<rect x="284.8" y="56.4" width="5.6" height="5.4" rx="0.8" fill="#fff" stroke="#5a9ae6" stroke-width="1"/>
<line x1="287.7" y1="59.3" x2="287.8" y2="62.0" stroke="#008000" stroke-width="1.4"/>
<rect x="283" y="127.6" width="4.6" height="4.6" fill="#e4f0fc" stroke="#5a9ae6" stroke-width="0.9"/>
<rect x="546.3" y="160.5" width="4" height="4" fill="none" stroke="#5a96e0" stroke-width="0.7"/>
<circle cx="548.3" cy="163" r="1.6" fill="#008000"/>
<circle cx="632" cy="173.6" r="2" fill="#008000"/>
<circle cx="699" cy="210" r="1.7" fill="#008000"/>
<circle cx="792.5" cy="260" r="2.2" fill="#008000"/>
<circle cx="509.5" cy="224.5" r="2.4" fill="#008000"/>
<circle cx="435.5" cy="221.8" r="1.5" fill="#008000"/>
<circle cx="572" cy="247" r="1.6" fill="#008000"/>
<circle cx="662.5" cy="282.5" r="1.7" fill="#008000"/>
<circle cx="663.75" cy="322" r="1.8" fill="#008000"/>
<circle cx="793.75" cy="310" r="2" fill="#008000"/>
<circle cx="237.5" cy="217" r="1.5" fill="#008000"/>
<circle cx="858.75" cy="357.5" r="1.2" fill="#008000"/>
<circle cx="730" cy="358.75" r="1.2" fill="#008000"/>
<line x1="272.5" y1="157.0" x2="271.8" y2="125.0" stroke="#2a2aff" stroke-width="0.7"/>
<line x1="271.8" y1="125.0" x2="270.8" y2="127.4" stroke="#2a2aff" stroke-width="0.7"/>
<line x1="271.8" y1="125.0" x2="272.9" y2="127.4" stroke="#2a2aff" stroke-width="0.7"/>
<line x1="272.5" y1="156.0" x2="279.5" y2="154.5" stroke="#22dd22" stroke-width="0.6"/>
<line x1="279.5" y1="154.5" x2="277.7" y2="154.2" stroke="#22dd22" stroke-width="0.6"/>
<line x1="279.5" y1="154.5" x2="278.0" y2="155.5" stroke="#22dd22" stroke-width="0.6"/>
<line x1="271.5" y1="157.5" x2="273.5" y2="157.5" stroke="#333" stroke-width="0.9"/>
<line x1="231.0" y1="227.5" x2="231.0" y2="207.5" stroke="#2a2aff" stroke-width="0.7"/>
<line x1="231.0" y1="207.5" x2="230.0" y2="209.9" stroke="#2a2aff" stroke-width="0.7"/>
<line x1="231.0" y1="207.5" x2="232.0" y2="209.9" stroke="#2a2aff" stroke-width="0.7"/>
<line x1="231.0" y1="226.5" x2="238.0" y2="225.0" stroke="#22dd22" stroke-width="0.6"/>
<line x1="238.0" y1="225.0" x2="236.2" y2="224.7" stroke="#22dd22" stroke-width="0.6"/>
<line x1="238.0" y1="225.0" x2="236.5" y2="226.0" stroke="#22dd22" stroke-width="0.6"/>
<line x1="230.0" y1="228.0" x2="232.0" y2="228.0" stroke="#333" stroke-width="0.9"/>
<line x1="270.0" y1="257.5" x2="270.0" y2="242.5" stroke="#2a2aff" stroke-width="0.7"/>
<line x1="270.0" y1="242.5" x2="269.0" y2="244.9" stroke="#2a2aff" stroke-width="0.7"/>
<line x1="270.0" y1="242.5" x2="271.0" y2="244.9" stroke="#2a2aff" stroke-width="0.7"/>
<line x1="270.0" y1="256.5" x2="277.0" y2="255.0" stroke="#22dd22" stroke-width="0.6"/>
<line x1="277.0" y1="255.0" x2="275.2" y2="254.7" stroke="#22dd22" stroke-width="0.6"/>
<line x1="277.0" y1="255.0" x2="275.5" y2="256.0" stroke="#22dd22" stroke-width="0.6"/>
<line x1="269.0" y1="258.0" x2="271.0" y2="258.0" stroke="#333" stroke-width="0.9"/>
<line x1="398.5" y1="262.5" x2="398.5" y2="242.5" stroke="#2a2aff" stroke-width="0.7"/>
<line x1="398.5" y1="242.5" x2="397.5" y2="244.9" stroke="#2a2aff" stroke-width="0.7"/>
<line x1="398.5" y1="242.5" x2="399.5" y2="244.9" stroke="#2a2aff" stroke-width="0.7"/>
<line x1="398.5" y1="261.5" x2="405.5" y2="260.0" stroke="#22dd22" stroke-width="0.6"/>
<line x1="405.5" y1="260.0" x2="403.7" y2="259.7" stroke="#22dd22" stroke-width="0.6"/>
<line x1="405.5" y1="260.0" x2="404.0" y2="261.0" stroke="#22dd22" stroke-width="0.6"/>
<line x1="397.5" y1="263.0" x2="399.5" y2="263.0" stroke="#333" stroke-width="0.9"/>
<line x1="355.0" y1="277.5" x2="355.0" y2="262.5" stroke="#2a2aff" stroke-width="0.7"/>
<line x1="355.0" y1="262.5" x2="354.0" y2="264.9" stroke="#2a2aff" stroke-width="0.7"/>
<line x1="355.0" y1="262.5" x2="356.0" y2="264.9" stroke="#2a2aff" stroke-width="0.7"/>
<line x1="355.0" y1="276.5" x2="362.0" y2="275.0" stroke="#22dd22" stroke-width="0.6"/>
<line x1="362.0" y1="275.0" x2="360.2" y2="274.7" stroke="#22dd22" stroke-width="0.6"/>
<line x1="362.0" y1="275.0" x2="360.5" y2="276.0" stroke="#22dd22" stroke-width="0.6"/>
<line x1="354.0" y1="278.0" x2="356.0" y2="278.0" stroke="#333" stroke-width="0.9"/>
<line x1="468.5" y1="272.5" x2="468.5" y2="255.0" stroke="#2a2aff" stroke-width="0.7"/>
<line x1="468.5" y1="255.0" x2="467.5" y2="257.4" stroke="#2a2aff" stroke-width="0.7"/>
<line x1="468.5" y1="255.0" x2="469.5" y2="257.4" stroke="#2a2aff" stroke-width="0.7"/>
<line x1="468.5" y1="271.5" x2="475.5" y2="270.0" stroke="#22dd22" stroke-width="0.6"/>
<line x1="475.5" y1="270.0" x2="473.7" y2="269.7" stroke="#22dd22" stroke-width="0.6"/>
<line x1="475.5" y1="270.0" x2="474.0" y2="271.0" stroke="#22dd22" stroke-width="0.6"/>
<line x1="467.5" y1="273.0" x2="469.5" y2="273.0" stroke="#333" stroke-width="0.9"/>
<line x1="417.5" y1="212.5" x2="417.5" y2="195.0" stroke="#2a2aff" stroke-width="0.7"/>
<line x1="417.5" y1="195.0" x2="416.5" y2="197.4" stroke="#2a2aff" stroke-width="0.7"/>
<line x1="417.5" y1="195.0" x2="418.5" y2="197.4" stroke="#2a2aff" stroke-width="0.7"/>
<line x1="417.5" y1="211.5" x2="424.5" y2="210.0" stroke="#22dd22" stroke-width="0.6"/>
<line x1="424.5" y1="210.0" x2="422.7" y2="209.7" stroke="#22dd22" stroke-width="0.6"/>
<line x1="424.5" y1="210.0" x2="423.0" y2="211.0" stroke="#22dd22" stroke-width="0.6"/>
<line x1="416.5" y1="213.0" x2="418.5" y2="213.0" stroke="#333" stroke-width="0.9"/>
<line x1="401.5" y1="215.0" x2="401.5" y2="202.5" stroke="#2a2aff" stroke-width="0.7"/>
<line x1="401.5" y1="202.5" x2="400.5" y2="204.9" stroke="#2a2aff" stroke-width="0.7"/>
<line x1="401.5" y1="202.5" x2="402.5" y2="204.9" stroke="#2a2aff" stroke-width="0.7"/>
<line x1="401.5" y1="214.0" x2="408.5" y2="212.5" stroke="#22dd22" stroke-width="0.6"/>
<line x1="408.5" y1="212.5" x2="406.7" y2="212.2" stroke="#22dd22" stroke-width="0.6"/>
<line x1="408.5" y1="212.5" x2="407.0" y2="213.5" stroke="#22dd22" stroke-width="0.6"/>
<line x1="400.5" y1="215.5" x2="402.5" y2="215.5" stroke="#333" stroke-width="0.9"/>
<line x1="478.5" y1="175.0" x2="476.5" y2="152.5" stroke="#2a2aff" stroke-width="0.7"/>
<line x1="476.5" y1="152.5" x2="475.7" y2="155.0" stroke="#2a2aff" stroke-width="0.7"/>
<line x1="476.5" y1="152.5" x2="477.7" y2="154.8" stroke="#2a2aff" stroke-width="0.7"/>
<line x1="478.5" y1="174.0" x2="485.5" y2="172.5" stroke="#22dd22" stroke-width="0.6"/>
<line x1="485.5" y1="172.5" x2="483.7" y2="172.2" stroke="#22dd22" stroke-width="0.6"/>
<line x1="485.5" y1="172.5" x2="484.0" y2="173.5" stroke="#22dd22" stroke-width="0.6"/>
<line x1="477.5" y1="175.5" x2="479.5" y2="175.5" stroke="#333" stroke-width="0.9"/>
<line x1="507.5" y1="160.0" x2="504.5" y2="132.5" stroke="#2a2aff" stroke-width="0.7"/>
<line x1="504.5" y1="132.5" x2="503.8" y2="135.0" stroke="#2a2aff" stroke-width="0.7"/>
<line x1="504.5" y1="132.5" x2="505.8" y2="134.8" stroke="#2a2aff" stroke-width="0.7"/>
<line x1="507.5" y1="159.0" x2="514.5" y2="157.5" stroke="#22dd22" stroke-width="0.6"/>
<line x1="514.5" y1="157.5" x2="512.7" y2="157.2" stroke="#22dd22" stroke-width="0.6"/>
<line x1="514.5" y1="157.5" x2="513.0" y2="158.5" stroke="#22dd22" stroke-width="0.6"/>
<line x1="506.5" y1="160.5" x2="508.5" y2="160.5" stroke="#333" stroke-width="0.9"/>
<line x1="517.5" y1="172.5" x2="516.5" y2="157.5" stroke="#2a2aff" stroke-width="0.7"/>
<line x1="516.5" y1="157.5" x2="515.6" y2="160.0" stroke="#2a2aff" stroke-width="0.7"/>
<line x1="516.5" y1="157.5" x2="517.7" y2="159.8" stroke="#2a2aff" stroke-width="0.7"/>
<line x1="517.5" y1="171.5" x2="524.5" y2="170.0" stroke="#22dd22" stroke-width="0.6"/>
<line x1="524.5" y1="170.0" x2="522.7" y2="169.7" stroke="#22dd22" stroke-width="0.6"/>
<line x1="524.5" y1="170.0" x2="523.0" y2="171.0" stroke="#22dd22" stroke-width="0.6"/>
<line x1="516.5" y1="173.0" x2="518.5" y2="173.0" stroke="#333" stroke-width="0.9"/>
<line x1="542.5" y1="222.5" x2="542.5" y2="207.5" stroke="#2a2aff" stroke-width="0.7"/>
<line x1="542.5" y1="207.5" x2="541.5" y2="209.9" stroke="#2a2aff" stroke-width="0.7"/>
<line x1="542.5" y1="207.5" x2="543.5" y2="209.9" stroke="#2a2aff" stroke-width="0.7"/>
<line x1="542.5" y1="221.5" x2="549.5" y2="220.0" stroke="#22dd22" stroke-width="0.6"/>
<line x1="549.5" y1="220.0" x2="547.7" y2="219.7" stroke="#22dd22" stroke-width="0.6"/>
<line x1="549.5" y1="220.0" x2="548.0" y2="221.0" stroke="#22dd22" stroke-width="0.6"/>
<line x1="541.5" y1="223.0" x2="543.5" y2="223.0" stroke="#333" stroke-width="0.9"/>
<line x1="610.0" y1="250.0" x2="610.0" y2="237.5" stroke="#2a2aff" stroke-width="0.7"/>
<line x1="610.0" y1="237.5" x2="609.0" y2="239.9" stroke="#2a2aff" stroke-width="0.7"/>
<line x1="610.0" y1="237.5" x2="611.0" y2="239.9" stroke="#2a2aff" stroke-width="0.7"/>
<line x1="610.0" y1="249.0" x2="617.0" y2="247.5" stroke="#22dd22" stroke-width="0.6"/>
<line x1="617.0" y1="247.5" x2="615.2" y2="247.2" stroke="#22dd22" stroke-width="0.6"/>
<line x1="617.0" y1="247.5" x2="615.5" y2="248.5" stroke="#22dd22" stroke-width="0.6"/>
<line x1="609.0" y1="250.5" x2="611.0" y2="250.5" stroke="#333" stroke-width="0.9"/>
<line x1="590.0" y1="252.5" x2="590.0" y2="242.5" stroke="#2a2aff" stroke-width="0.7"/>
<line x1="590.0" y1="242.5" x2="589.0" y2="244.9" stroke="#2a2aff" stroke-width="0.7"/>
<line x1="590.0" y1="242.5" x2="591.0" y2="244.9" stroke="#2a2aff" stroke-width="0.7"/>
<line x1="590.0" y1="251.5" x2="597.0" y2="250.0" stroke="#22dd22" stroke-width="0.6"/>
<line x1="597.0" y1="250.0" x2="595.2" y2="249.7" stroke="#22dd22" stroke-width="0.6"/>
<line x1="597.0" y1="250.0" x2="595.5" y2="251.0" stroke="#22dd22" stroke-width="0.6"/>
<line x1="589.0" y1="253.0" x2="591.0" y2="253.0" stroke="#333" stroke-width="0.9"/>
<line x1="616.5" y1="182.5" x2="616.5" y2="161.5" stroke="#2a2aff" stroke-width="0.7"/>
<line x1="616.5" y1="161.5" x2="615.5" y2="163.9" stroke="#2a2aff" stroke-width="0.7"/>
<line x1="616.5" y1="161.5" x2="617.5" y2="163.9" stroke="#2a2aff" stroke-width="0.7"/>
<line x1="616.5" y1="181.5" x2="623.5" y2="180.0" stroke="#22dd22" stroke-width="0.6"/>
<line x1="623.5" y1="180.0" x2="621.7" y2="179.7" stroke="#22dd22" stroke-width="0.6"/>
<line x1="623.5" y1="180.0" x2="622.0" y2="181.0" stroke="#22dd22" stroke-width="0.6"/>
<line x1="615.5" y1="183.0" x2="617.5" y2="183.0" stroke="#333" stroke-width="0.9"/>
<line x1="585.0" y1="180.0" x2="585.0" y2="168.0" stroke="#2a2aff" stroke-width="0.7"/>
<line x1="585.0" y1="168.0" x2="584.0" y2="170.4" stroke="#2a2aff" stroke-width="0.7"/>
<line x1="585.0" y1="168.0" x2="586.0" y2="170.4" stroke="#2a2aff" stroke-width="0.7"/>
<line x1="585.0" y1="179.0" x2="592.0" y2="177.5" stroke="#22dd22" stroke-width="0.6"/>
<line x1="592.0" y1="177.5" x2="590.2" y2="177.2" stroke="#22dd22" stroke-width="0.6"/>
<line x1="592.0" y1="177.5" x2="590.5" y2="178.5" stroke="#22dd22" stroke-width="0.6"/>
<line x1="584.0" y1="180.5" x2="586.0" y2="180.5" stroke="#333" stroke-width="0.9"/>
<line x1="645.0" y1="285.0" x2="645.0" y2="262.5" stroke="#2a2aff" stroke-width="0.7"/>
<line x1="645.0" y1="262.5" x2="644.0" y2="264.9" stroke="#2a2aff" stroke-width="0.7"/>
<line x1="645.0" y1="262.5" x2="646.0" y2="264.9" stroke="#2a2aff" stroke-width="0.7"/>
<line x1="645.0" y1="284.0" x2="652.0" y2="282.5" stroke="#22dd22" stroke-width="0.6"/>
<line x1="652.0" y1="282.5" x2="650.2" y2="282.2" stroke="#22dd22" stroke-width="0.6"/>
<line x1="652.0" y1="282.5" x2="650.5" y2="283.5" stroke="#22dd22" stroke-width="0.6"/>
<line x1="644.0" y1="285.5" x2="646.0" y2="285.5" stroke="#333" stroke-width="0.9"/>
<line x1="550.0" y1="290.0" x2="550.0" y2="280.0" stroke="#2a2aff" stroke-width="0.7"/>
<line x1="550.0" y1="280.0" x2="549.0" y2="282.4" stroke="#2a2aff" stroke-width="0.7"/>
<line x1="550.0" y1="280.0" x2="551.0" y2="282.4" stroke="#2a2aff" stroke-width="0.7"/>
<line x1="550.0" y1="289.0" x2="557.0" y2="287.5" stroke="#22dd22" stroke-width="0.6"/>
<line x1="557.0" y1="287.5" x2="555.2" y2="287.2" stroke="#22dd22" stroke-width="0.6"/>
<line x1="557.0" y1="287.5" x2="555.5" y2="288.5" stroke="#22dd22" stroke-width="0.6"/>
<line x1="549.0" y1="290.5" x2="551.0" y2="290.5" stroke="#333" stroke-width="0.9"/>
<line x1="642.5" y1="325.0" x2="642.5" y2="312.5" stroke="#2a2aff" stroke-width="0.7"/>
<line x1="642.5" y1="312.5" x2="641.5" y2="314.9" stroke="#2a2aff" stroke-width="0.7"/>
<line x1="642.5" y1="312.5" x2="643.5" y2="314.9" stroke="#2a2aff" stroke-width="0.7"/>
<line x1="642.5" y1="324.0" x2="649.5" y2="322.5" stroke="#22dd22" stroke-width="0.6"/>
<line x1="649.5" y1="322.5" x2="647.7" y2="322.2" stroke="#22dd22" stroke-width="0.6"/>
<line x1="649.5" y1="322.5" x2="648.0" y2="323.5" stroke="#22dd22" stroke-width="0.6"/>
<line x1="641.5" y1="325.5" x2="643.5" y2="325.5" stroke="#333" stroke-width="0.9"/>
<line x1="669.0" y1="217.5" x2="669.0" y2="202.5" stroke="#2a2aff" stroke-width="0.7"/>
<line x1="669.0" y1="202.5" x2="668.0" y2="204.9" stroke="#2a2aff" stroke-width="0.7"/>
<line x1="669.0" y1="202.5" x2="670.0" y2="204.9" stroke="#2a2aff" stroke-width="0.7"/>
<line x1="669.0" y1="216.5" x2="676.0" y2="215.0" stroke="#22dd22" stroke-width="0.6"/>
<line x1="676.0" y1="215.0" x2="674.2" y2="214.7" stroke="#22dd22" stroke-width="0.6"/>
<line x1="676.0" y1="215.0" x2="674.5" y2="216.0" stroke="#22dd22" stroke-width="0.6"/>
<line x1="668.0" y1="218.0" x2="670.0" y2="218.0" stroke="#333" stroke-width="0.9"/>
<line x1="687.5" y1="220.0" x2="687.5" y2="207.5" stroke="#2a2aff" stroke-width="0.7"/>
<line x1="687.5" y1="207.5" x2="686.5" y2="209.9" stroke="#2a2aff" stroke-width="0.7"/>
<line x1="687.5" y1="207.5" x2="688.5" y2="209.9" stroke="#2a2aff" stroke-width="0.7"/>
<line x1="687.5" y1="219.0" x2="694.5" y2="217.5" stroke="#22dd22" stroke-width="0.6"/>
<line x1="694.5" y1="217.5" x2="692.7" y2="217.2" stroke="#22dd22" stroke-width="0.6"/>
<line x1="694.5" y1="217.5" x2="693.0" y2="218.5" stroke="#22dd22" stroke-width="0.6"/>
<line x1="686.5" y1="220.5" x2="688.5" y2="220.5" stroke="#333" stroke-width="0.9"/>
<line x1="722.5" y1="225.0" x2="722.5" y2="205.0" stroke="#2a2aff" stroke-width="0.7"/>
<line x1="722.5" y1="205.0" x2="721.5" y2="207.4" stroke="#2a2aff" stroke-width="0.7"/>
<line x1="722.5" y1="205.0" x2="723.5" y2="207.4" stroke="#2a2aff" stroke-width="0.7"/>
<line x1="722.5" y1="224.0" x2="729.5" y2="222.5" stroke="#22dd22" stroke-width="0.6"/>
<line x1="729.5" y1="222.5" x2="727.7" y2="222.2" stroke="#22dd22" stroke-width="0.6"/>
<line x1="729.5" y1="222.5" x2="728.0" y2="223.5" stroke="#22dd22" stroke-width="0.6"/>
<line x1="721.5" y1="225.5" x2="723.5" y2="225.5" stroke="#333" stroke-width="0.9"/>
<line x1="759.0" y1="270.0" x2="759.0" y2="252.5" stroke="#2a2aff" stroke-width="0.7"/>
<line x1="759.0" y1="252.5" x2="758.0" y2="254.9" stroke="#2a2aff" stroke-width="0.7"/>
<line x1="759.0" y1="252.5" x2="760.0" y2="254.9" stroke="#2a2aff" stroke-width="0.7"/>
<line x1="759.0" y1="269.0" x2="766.0" y2="267.5" stroke="#22dd22" stroke-width="0.6"/>
<line x1="766.0" y1="267.5" x2="764.2" y2="267.2" stroke="#22dd22" stroke-width="0.6"/>
<line x1="766.0" y1="267.5" x2="764.5" y2="268.5" stroke="#22dd22" stroke-width="0.6"/>
<line x1="758.0" y1="270.5" x2="760.0" y2="270.5" stroke="#333" stroke-width="0.9"/>
<line x1="761.0" y1="315.0" x2="761.0" y2="298.5" stroke="#2a2aff" stroke-width="0.7"/>
<line x1="761.0" y1="298.5" x2="760.0" y2="300.9" stroke="#2a2aff" stroke-width="0.7"/>
<line x1="761.0" y1="298.5" x2="762.0" y2="300.9" stroke="#2a2aff" stroke-width="0.7"/>
<line x1="761.0" y1="314.0" x2="768.0" y2="312.5" stroke="#22dd22" stroke-width="0.6"/>
<line x1="768.0" y1="312.5" x2="766.2" y2="312.2" stroke="#22dd22" stroke-width="0.6"/>
<line x1="768.0" y1="312.5" x2="766.5" y2="313.5" stroke="#22dd22" stroke-width="0.6"/>
<line x1="760.0" y1="315.5" x2="762.0" y2="315.5" stroke="#333" stroke-width="0.9"/>
<line x1="701.5" y1="327.5" x2="701.5" y2="316.0" stroke="#2a2aff" stroke-width="0.7"/>
<line x1="701.5" y1="316.0" x2="700.5" y2="318.4" stroke="#2a2aff" stroke-width="0.7"/>
<line x1="701.5" y1="316.0" x2="702.5" y2="318.4" stroke="#2a2aff" stroke-width="0.7"/>
<line x1="701.5" y1="326.5" x2="708.5" y2="325.0" stroke="#22dd22" stroke-width="0.6"/>
<line x1="708.5" y1="325.0" x2="706.7" y2="324.7" stroke="#22dd22" stroke-width="0.6"/>
<line x1="708.5" y1="325.0" x2="707.0" y2="326.0" stroke="#22dd22" stroke-width="0.6"/>
<line x1="700.5" y1="328.0" x2="702.5" y2="328.0" stroke="#333" stroke-width="0.9"/>
<line x1="827.5" y1="359.0" x2="827.5" y2="345.0" stroke="#2a2aff" stroke-width="0.7"/>
<line x1="827.5" y1="345.0" x2="826.5" y2="347.4" stroke="#2a2aff" stroke-width="0.7"/>
<line x1="827.5" y1="345.0" x2="828.5" y2="347.4" stroke="#2a2aff" stroke-width="0.7"/>
<line x1="827.5" y1="358.0" x2="834.5" y2="356.5" stroke="#22dd22" stroke-width="0.6"/>
<line x1="834.5" y1="356.5" x2="832.7" y2="356.2" stroke="#22dd22" stroke-width="0.6"/>
<line x1="834.5" y1="356.5" x2="833.0" y2="357.5" stroke="#22dd22" stroke-width="0.6"/>
<line x1="826.5" y1="359.5" x2="828.5" y2="359.5" stroke="#333" stroke-width="0.9"/>
<line x1="226.5" y1="352.0" x2="226.5" y2="336.0" stroke="#2a2aff" stroke-width="0.7"/>
<line x1="226.5" y1="336.0" x2="225.5" y2="338.4" stroke="#2a2aff" stroke-width="0.7"/>
<line x1="226.5" y1="336.0" x2="227.5" y2="338.4" stroke="#2a2aff" stroke-width="0.7"/>
<line x1="226.5" y1="351.0" x2="233.5" y2="349.5" stroke="#22dd22" stroke-width="0.6"/>
<line x1="233.5" y1="349.5" x2="231.7" y2="349.2" stroke="#22dd22" stroke-width="0.6"/>
<line x1="233.5" y1="349.5" x2="232.0" y2="350.5" stroke="#22dd22" stroke-width="0.6"/>
<line x1="225.5" y1="352.5" x2="227.5" y2="352.5" stroke="#333" stroke-width="0.9"/>
<line x1="206.0" y1="345.0" x2="206.0" y2="330.0" stroke="#2a2aff" stroke-width="0.7"/>
<line x1="206.0" y1="330.0" x2="205.0" y2="332.4" stroke="#2a2aff" stroke-width="0.7"/>
<line x1="206.0" y1="330.0" x2="207.0" y2="332.4" stroke="#2a2aff" stroke-width="0.7"/>
<line x1="206.0" y1="344.0" x2="213.0" y2="342.5" stroke="#22dd22" stroke-width="0.6"/>
<line x1="213.0" y1="342.5" x2="211.2" y2="342.2" stroke="#22dd22" stroke-width="0.6"/>
<line x1="213.0" y1="342.5" x2="211.5" y2="343.5" stroke="#22dd22" stroke-width="0.6"/>
<line x1="205.0" y1="345.5" x2="207.0" y2="345.5" stroke="#333" stroke-width="0.9"/>
<line x1="362.0" y1="353.0" x2="362.0" y2="336.0" stroke="#2a2aff" stroke-width="0.7"/>
<line x1="362.0" y1="336.0" x2="361.0" y2="338.4" stroke="#2a2aff" stroke-width="0.7"/>
<line x1="362.0" y1="336.0" x2="363.0" y2="338.4" stroke="#2a2aff" stroke-width="0.7"/>
<line x1="362.0" y1="352.0" x2="369.0" y2="350.5" stroke="#22dd22" stroke-width="0.6"/>
<line x1="369.0" y1="350.5" x2="367.2" y2="350.2" stroke="#22dd22" stroke-width="0.6"/>
<line x1="369.0" y1="350.5" x2="367.5" y2="351.5" stroke="#22dd22" stroke-width="0.6"/>
<line x1="361.0" y1="353.5" x2="363.0" y2="353.5" stroke="#333" stroke-width="0.9"/>
<line x1="378.0" y1="353.0" x2="378.0" y2="336.0" stroke="#2a2aff" stroke-width="0.7"/>
<line x1="378.0" y1="336.0" x2="377.0" y2="338.4" stroke="#2a2aff" stroke-width="0.7"/>
<line x1="378.0" y1="336.0" x2="379.0" y2="338.4" stroke="#2a2aff" stroke-width="0.7"/>
<line x1="378.0" y1="352.0" x2="385.0" y2="350.5" stroke="#22dd22" stroke-width="0.6"/>
<line x1="385.0" y1="350.5" x2="383.2" y2="350.2" stroke="#22dd22" stroke-width="0.6"/>
<line x1="385.0" y1="350.5" x2="383.5" y2="351.5" stroke="#22dd22" stroke-width="0.6"/>
<line x1="377.0" y1="353.5" x2="379.0" y2="353.5" stroke="#333" stroke-width="0.9"/>
<line x1="292.0" y1="352.0" x2="292.0" y2="336.0" stroke="#2a2aff" stroke-width="0.7"/>
<line x1="292.0" y1="336.0" x2="291.0" y2="338.4" stroke="#2a2aff" stroke-width="0.7"/>
<line x1="292.0" y1="336.0" x2="293.0" y2="338.4" stroke="#2a2aff" stroke-width="0.7"/>
<line x1="292.0" y1="351.0" x2="299.0" y2="349.5" stroke="#22dd22" stroke-width="0.6"/>
<line x1="299.0" y1="349.5" x2="297.2" y2="349.2" stroke="#22dd22" stroke-width="0.6"/>
<line x1="299.0" y1="349.5" x2="297.5" y2="350.5" stroke="#22dd22" stroke-width="0.6"/>
<line x1="291.0" y1="352.5" x2="293.0" y2="352.5" stroke="#333" stroke-width="0.9"/>
<line x1="327.0" y1="352.0" x2="327.0" y2="340.0" stroke="#2a2aff" stroke-width="0.7"/>
<line x1="327.0" y1="340.0" x2="326.0" y2="342.4" stroke="#2a2aff" stroke-width="0.7"/>
<line x1="327.0" y1="340.0" x2="328.0" y2="342.4" stroke="#2a2aff" stroke-width="0.7"/>
<line x1="327.0" y1="351.0" x2="334.0" y2="349.5" stroke="#22dd22" stroke-width="0.6"/>
<line x1="334.0" y1="349.5" x2="332.2" y2="349.2" stroke="#22dd22" stroke-width="0.6"/>
<line x1="334.0" y1="349.5" x2="332.5" y2="350.5" stroke="#22dd22" stroke-width="0.6"/>
<line x1="326.0" y1="352.5" x2="328.0" y2="352.5" stroke="#333" stroke-width="0.9"/>
<line x1="197.0" y1="350.0" x2="197.0" y2="335.0" stroke="#2a2aff" stroke-width="0.7"/>
<line x1="197.0" y1="335.0" x2="196.0" y2="337.4" stroke="#2a2aff" stroke-width="0.7"/>
<line x1="197.0" y1="335.0" x2="198.0" y2="337.4" stroke="#2a2aff" stroke-width="0.7"/>
<line x1="197.0" y1="349.0" x2="204.0" y2="347.5" stroke="#22dd22" stroke-width="0.6"/>
<line x1="204.0" y1="347.5" x2="202.2" y2="347.2" stroke="#22dd22" stroke-width="0.6"/>
<line x1="204.0" y1="347.5" x2="202.5" y2="348.5" stroke="#22dd22" stroke-width="0.6"/>
<line x1="196.0" y1="350.5" x2="198.0" y2="350.5" stroke="#333" stroke-width="0.9"/>
<line x1="404.0" y1="296.0" x2="404.0" y2="282.0" stroke="#2a2aff" stroke-width="0.7"/>
<line x1="404.0" y1="282.0" x2="403.0" y2="284.4" stroke="#2a2aff" stroke-width="0.7"/>
<line x1="404.0" y1="282.0" x2="405.0" y2="284.4" stroke="#2a2aff" stroke-width="0.7"/>
<line x1="404.0" y1="295.0" x2="411.0" y2="293.5" stroke="#22dd22" stroke-width="0.6"/>
<line x1="411.0" y1="293.5" x2="409.2" y2="293.2" stroke="#22dd22" stroke-width="0.6"/>
<line x1="411.0" y1="293.5" x2="409.5" y2="294.5" stroke="#22dd22" stroke-width="0.6"/>
<line x1="403.0" y1="296.5" x2="405.0" y2="296.5" stroke="#333" stroke-width="0.9"/>
<line x1="707.5" y1="266.5" x2="687.5" y2="267.5" stroke="#2a2aff" stroke-width="0.7"/>
<line x1="687.5" y1="267.5" x2="689.9" y2="268.4" stroke="#2a2aff" stroke-width="0.7"/>
<line x1="687.5" y1="267.5" x2="689.8" y2="266.4" stroke="#2a2aff" stroke-width="0.7"/>
<line x1="697.0" y1="265.0" x2="707.5" y2="265.5" stroke="#222" stroke-width="1.0"/>
<line x1="800.0" y1="336.0" x2="785.0" y2="336.5" stroke="#2a2aff" stroke-width="0.7"/>
<line x1="785.0" y1="336.5" x2="787.4" y2="337.4" stroke="#2a2aff" stroke-width="0.7"/>
<line x1="785.0" y1="336.5" x2="787.4" y2="335.4" stroke="#2a2aff" stroke-width="0.7"/>
<line x1="792.0" y1="335.5" x2="802.0" y2="335.5" stroke="#222" stroke-width="1.0"/>
<line x1="276.0" y1="213.0" x2="306.0" y2="220.0" stroke="#2a2aff" stroke-width="0.7"/>
<line x1="306.0" y1="220.0" x2="303.6" y2="218.2" stroke="#2a2aff" stroke-width="0.7"/>
<line x1="306.0" y1="220.0" x2="303.0" y2="220.5" stroke="#2a2aff" stroke-width="0.7"/>
<line x1="222.0" y1="390.5" x2="242.0" y2="390.8" stroke="#2a2aff" stroke-width="0.7"/>
<line x1="242.0" y1="390.8" x2="239.6" y2="389.8" stroke="#2a2aff" stroke-width="0.7"/>
<line x1="242.0" y1="390.8" x2="239.6" y2="391.8" stroke="#2a2aff" stroke-width="0.7"/>
<line x1="222.0" y1="390.8" x2="236.0" y2="390.8" stroke="#333" stroke-width="0.9"/>
<line x1="704.0" y1="333.0" x2="698.0" y2="324.0" stroke="#2a2aff" stroke-width="0.7"/>
<line x1="698.0" y1="324.0" x2="698.5" y2="326.6" stroke="#2a2aff" stroke-width="0.7"/>
<line x1="698.0" y1="324.0" x2="700.2" y2="325.4" stroke="#2a2aff" stroke-width="0.7"/>
<line x1="829.5" y1="372.0" x2="822.0" y2="360.5" stroke="#2a2aff" stroke-width="0.7"/>
<line x1="822.0" y1="360.5" x2="822.5" y2="363.1" stroke="#2a2aff" stroke-width="0.7"/>
<line x1="822.0" y1="360.5" x2="824.2" y2="362.0" stroke="#2a2aff" stroke-width="0.7"/>
<line x1="761.0" y1="339.0" x2="752.0" y2="329.0" stroke="#2a2aff" stroke-width="0.7"/>
<line x1="752.0" y1="329.0" x2="752.8" y2="331.5" stroke="#2a2aff" stroke-width="0.7"/>
<line x1="752.0" y1="329.0" x2="754.4" y2="330.1" stroke="#2a2aff" stroke-width="0.7"/>
<line x1="750.0" y1="371.0" x2="754.0" y2="362.0" stroke="#2a2aff" stroke-width="0.7"/>
<line x1="754.0" y1="362.0" x2="752.1" y2="363.8" stroke="#2a2aff" stroke-width="0.7"/>
<line x1="754.0" y1="362.0" x2="754.0" y2="364.6" stroke="#2a2aff" stroke-width="0.7"/>
<line x1="687.0" y1="339.0" x2="692.0" y2="330.0" stroke="#2a2aff" stroke-width="0.7"/>
<line x1="692.0" y1="330.0" x2="690.0" y2="331.6" stroke="#2a2aff" stroke-width="0.7"/>
<line x1="692.0" y1="330.0" x2="691.7" y2="332.6" stroke="#2a2aff" stroke-width="0.7"/>
<line x1="541.0" y1="236.5" x2="535.0" y2="239.5" stroke="#2a2aff" stroke-width="0.7"/>
<line x1="535.0" y1="239.5" x2="537.0" y2="239.4" stroke="#2a2aff" stroke-width="0.7"/>
<line x1="535.0" y1="239.5" x2="536.3" y2="238.0" stroke="#2a2aff" stroke-width="0.7"/>
<line x1="275.5" y1="156.0" x2="304.5" y2="162.0" stroke="#22dd22" stroke-width="0.7"/>
<line x1="304.5" y1="162.0" x2="302.0" y2="160.3" stroke="#22dd22" stroke-width="0.7"/>
<line x1="304.5" y1="162.0" x2="301.6" y2="162.6" stroke="#22dd22" stroke-width="0.7"/>
<line x1="241.0" y1="227.0" x2="277.0" y2="236.0" stroke="#22dd22" stroke-width="0.7"/>
<line x1="277.0" y1="236.0" x2="274.6" y2="234.2" stroke="#22dd22" stroke-width="0.7"/>
<line x1="277.0" y1="236.0" x2="274.0" y2="236.5" stroke="#22dd22" stroke-width="0.7"/>
<line x1="552.0" y1="234.5" x2="568.0" y2="237.8" stroke="#22dd22" stroke-width="0.7"/>
<line x1="568.0" y1="237.8" x2="565.9" y2="236.4" stroke="#22dd22" stroke-width="0.7"/>
<line x1="568.0" y1="237.8" x2="565.5" y2="238.3" stroke="#22dd22" stroke-width="0.7"/>
<line x1="690.0" y1="222.0" x2="708.0" y2="223.0" stroke="#22dd22" stroke-width="0.7"/>
<line x1="708.0" y1="223.0" x2="705.8" y2="221.9" stroke="#22dd22" stroke-width="0.7"/>
<line x1="708.0" y1="223.0" x2="705.6" y2="223.8" stroke="#22dd22" stroke-width="0.7"/>
<line x1="722.0" y1="220.0" x2="739.0" y2="215.0" stroke="#22dd22" stroke-width="0.7"/>
<line x1="739.0" y1="215.0" x2="736.5" y2="214.7" stroke="#22dd22" stroke-width="0.7"/>
<line x1="739.0" y1="215.0" x2="737.1" y2="216.6" stroke="#22dd22" stroke-width="0.7"/>
<line x1="283.3" y1="175.5" x2="279.4" y2="184.7" stroke="#e03030" stroke-width="0.8"/>
<line x1="283.3" y1="175.5" x2="287.2" y2="184.7" stroke="#e03030" stroke-width="0.8"/>
<line x1="352.0" y1="218.0" x2="349.7" y2="217.0" stroke="#e03030" stroke-width="0.8"/>
<line x1="352.0" y1="218.0" x2="349.7" y2="219.0" stroke="#e03030" stroke-width="0.8"/>
<line x1="549.0" y1="213.0" x2="547.8" y2="215.8" stroke="#e03030" stroke-width="0.8"/>
<line x1="549.0" y1="213.0" x2="550.2" y2="215.8" stroke="#e03030" stroke-width="0.8"/>
<line x1="702.0" y1="247.0" x2="700.8" y2="249.8" stroke="#e03030" stroke-width="0.8"/>
<line x1="702.0" y1="247.0" x2="703.2" y2="249.8" stroke="#e03030" stroke-width="0.8"/>
<line x1="306.0" y1="216.5" x2="303.7" y2="215.5" stroke="#e03030" stroke-width="0.8"/>
<line x1="306.0" y1="216.5" x2="303.7" y2="217.5" stroke="#e03030" stroke-width="0.8"/>
<line x1="244.0" y1="209.0" x2="243.0" y2="211.3" stroke="#e03030" stroke-width="0.8"/>
<line x1="244.0" y1="209.0" x2="245.0" y2="211.3" stroke="#e03030" stroke-width="0.8"/>
<line x1="285.0" y1="243.0" x2="282.7" y2="242.0" stroke="#e03030" stroke-width="0.8"/>
<line x1="285.0" y1="243.0" x2="282.7" y2="244.0" stroke="#e03030" stroke-width="0.8"/>
<line x1="527.0" y1="218.0" x2="529.3" y2="219.0" stroke="#e03030" stroke-width="0.8"/>
<line x1="527.0" y1="218.0" x2="529.3" y2="217.0" stroke="#e03030" stroke-width="0.8"/>
<line x1="598.0" y1="242.0" x2="600.3" y2="243.0" stroke="#e03030" stroke-width="0.8"/>
<line x1="598.0" y1="242.0" x2="600.3" y2="241.0" stroke="#e03030" stroke-width="0.8"/>
<line x1="409.5" y1="254.0" x2="407.2" y2="253.0" stroke="#e03030" stroke-width="0.8"/>
<line x1="409.5" y1="254.0" x2="407.2" y2="255.0" stroke="#e03030" stroke-width="0.8"/>
<line x1="466.0" y1="263.5" x2="468.3" y2="264.5" stroke="#e03030" stroke-width="0.8"/>
<line x1="466.0" y1="263.5" x2="468.3" y2="262.5" stroke="#e03030" stroke-width="0.8"/>
<line x1="279.0" y1="70.8" x2="295.5" y2="75.5" stroke="#555" stroke-width="1.1"/>
<line x1="280.7" y1="67.4" x2="277.3" y2="74.2" stroke="#555" stroke-width="2.09"/>
<line x1="297.2" y1="72.1" x2="293.8" y2="78.9" stroke="#555" stroke-width="2.09"/>
<line x1="296.0" y1="75.8" x2="301.5" y2="77.3" stroke="#2a2aff" stroke-width="0.8"/>
<line x1="301.5" y1="77.3" x2="299.5" y2="75.8" stroke="#2a2aff" stroke-width="0.8"/>
<line x1="301.5" y1="77.3" x2="299.0" y2="77.6" stroke="#2a2aff" stroke-width="0.8"/>
<line x1="288.3" y1="61.0" x2="288.6" y2="67.0" stroke="#e03030" stroke-width="0.6"/>
<line x1="288.6" y1="67.0" x2="289.1" y2="65.6" stroke="#e03030" stroke-width="0.6"/>
<line x1="288.6" y1="67.0" x2="287.9" y2="65.6" stroke="#e03030" stroke-width="0.6"/>
<line x1="288.5" y1="66.0" x2="289.0" y2="71.0" stroke="#22dd22" stroke-width="0.6"/>
<line x1="289.0" y1="71.0" x2="289.4" y2="69.6" stroke="#22dd22" stroke-width="0.6"/>
<line x1="289.0" y1="71.0" x2="288.3" y2="69.7" stroke="#22dd22" stroke-width="0.6"/>
<line x1="270.6" y1="155.0" x2="272.4" y2="163.5" stroke="#1a1a1a" stroke-width="1.2"/>
<line x1="274.1" y1="155.9" x2="267.1" y2="154.1" stroke="#1a1a1a" stroke-width="1.44"/>
<line x1="275.9" y1="164.4" x2="268.9" y2="162.6" stroke="#1a1a1a" stroke-width="1.44"/>
<line x1="235.0" y1="230.0" x2="232.0" y2="238.0" stroke="#222" stroke-width="0.9"/>
<line x1="236.4" y1="231.4" x2="233.6" y2="228.6" stroke="#222" stroke-width="1.08"/>
<line x1="233.4" y1="239.4" x2="230.6" y2="236.6" stroke="#222" stroke-width="1.08"/>
<line x1="542.0" y1="236.3" x2="557.0" y2="233.4" stroke="#222" stroke-width="1.0"/>
<line x1="542.3" y1="235.3" x2="541.7" y2="237.3" stroke="#222" stroke-width="1.2"/>
<line x1="557.3" y1="232.4" x2="556.7" y2="234.4" stroke="#222" stroke-width="1.2"/>
<line x1="810.0" y1="316.5" x2="810.0" y2="307.0" stroke="#2a2aff" stroke-width="0.7"/>
<line x1="810.0" y1="307.0" x2="809.0" y2="309.4" stroke="#2a2aff" stroke-width="0.7"/>
<line x1="810.0" y1="307.0" x2="811.0" y2="309.4" stroke="#2a2aff" stroke-width="0.7"/>
<line x1="809.4" y1="317.2" x2="809.4" y2="323.0" stroke="#222" stroke-width="0.9"/>
<line x1="810.8" y1="317.9" x2="808.0" y2="316.5" stroke="#222" stroke-width="1.08"/>
<line x1="810.8" y1="323.7" x2="808.0" y2="322.3" stroke="#222" stroke-width="1.08"/>
<line x1="811.0" y1="319.6" x2="824.0" y2="318.6" stroke="#22dd22" stroke-width="0.7"/>
<line x1="824.0" y1="318.6" x2="822.1" y2="318.0" stroke="#22dd22" stroke-width="0.7"/>
<line x1="824.0" y1="318.6" x2="822.2" y2="319.5" stroke="#22dd22" stroke-width="0.7"/>
<line x1="759.0" y1="275.0" x2="755.0" y2="263.0" stroke="#2a2aff" stroke-width="0.7"/>
<line x1="755.0" y1="263.0" x2="754.8" y2="265.4" stroke="#2a2aff" stroke-width="0.7"/>
<line x1="755.0" y1="263.0" x2="756.6" y2="264.8" stroke="#2a2aff" stroke-width="0.7"/>
<line x1="760.0" y1="275.5" x2="767.0" y2="277.0" stroke="#22dd22" stroke-width="0.7"/>
<line x1="767.0" y1="277.0" x2="765.5" y2="276.0" stroke="#22dd22" stroke-width="0.7"/>
<line x1="767.0" y1="277.0" x2="765.2" y2="277.3" stroke="#22dd22" stroke-width="0.7"/>
<line x1="777.0" y1="323.0" x2="774.0" y2="311.0" stroke="#2a2aff" stroke-width="0.7"/>
<line x1="774.0" y1="311.0" x2="773.6" y2="313.4" stroke="#2a2aff" stroke-width="0.7"/>
<line x1="774.0" y1="311.0" x2="775.4" y2="312.9" stroke="#2a2aff" stroke-width="0.7"/>
<text x="0" y="0" transform="translate(441.3,152.6) rotate(7.0)" font-size="10.5" fill="#5cbcb4" text-anchor="middle" font-weight="bold">IPE200</text>
<text x="0" y="0" transform="translate(431.0,181.0) rotate(-9.5)" font-size="13" fill="#008000" text-anchor="middle" font-weight="bold">Ø12</text>
<text x="0" y="0" transform="translate(405.0,202.0) rotate(31.0)" font-size="13" fill="#008000" text-anchor="middle" font-weight="bold">Ø12</text>
<text x="0" y="0" transform="translate(481.0,194.0) rotate(-27.0)" font-size="11.5" fill="#008000" text-anchor="middle" font-weight="bold">2xIPE100([])</text>
<text x="0" y="0" transform="translate(517.0,207.0) rotate(-55.0)" font-size="12" fill="#008000" text-anchor="middle" font-weight="bold">Ø10</text>
<text x="0" y="0" transform="translate(553.0,190.0) rotate(-10.0)" font-size="12" fill="#008000" text-anchor="middle" font-weight="bold">Ø10</text>
<text x="0" y="0" transform="translate(560.0,198.0) rotate(-20.0)" font-size="11" fill="#008000" text-anchor="middle" font-weight="bold">IPE100</text>
<text x="0" y="0" transform="translate(562.0,197.0) rotate(-22.0)" font-size="11" fill="#008000" text-anchor="middle" font-weight="bold" fill-opacity="0.6">IPE100</text>
<text x="0" y="0" transform="translate(569.0,218.0) rotate(-3.0)" font-size="11" fill="#008000" text-anchor="middle" font-weight="bold">Ø10</text>
<text x="0" y="0" transform="translate(604.0,204.0) rotate(-50.0)" font-size="12" fill="#008000" text-anchor="middle" font-weight="bold">Ø10</text>
<text x="0" y="0" transform="translate(474.0,226.5) rotate(2.0)" font-size="7" fill="#008000" text-anchor="middle" font-weight="bold">IPE300</text>
<text x="0" y="0" transform="translate(595.5,171.0) rotate(7.0)" font-size="10" fill="#008000" text-anchor="middle" font-weight="bold">IPE200</text>
<text x="0" y="0" transform="translate(672.0,195.0) rotate(28.0)" font-size="9" fill="#008000" text-anchor="middle" font-weight="bold">IPE200</text>
<text x="0" y="0" transform="translate(752.0,238.0) rotate(28.0)" font-size="11" fill="#008000" text-anchor="middle" font-weight="bold">IPE200</text>
<text x="0" y="0" transform="translate(627.0,227.0) rotate(-20.0)" font-size="10" fill="#008000" text-anchor="middle" font-weight="bold">2xIPE100([])</text>
<text x="0" y="0" transform="translate(645.0,248.0) rotate(3.0)" font-size="12" fill="#008000" text-anchor="middle" font-weight="bold">Ø12</text>
<text x="0" y="0" transform="translate(680.0,240.0) rotate(-62.0)" font-size="12" fill="#008000" text-anchor="middle" font-weight="bold">Ø12</text>
<text x="0" y="0" transform="translate(720.0,271.0) rotate(-9.0)" font-size="8.5" fill="#008000" text-anchor="middle" font-weight="bold">HEA120</text>
<text x="0" y="0" transform="translate(702.5,286.5) rotate(10.0)" font-size="7.5" fill="#008000" text-anchor="middle" font-weight="bold">Ø12</text>
<text x="0" y="0" transform="translate(739.0,283.0) rotate(-22.0)" font-size="9" fill="#008000" text-anchor="middle" font-weight="bold">Ø12</text>
<text x="0" y="0" transform="translate(620.0,267.0) rotate(22.0)" font-size="7" fill="#008000" text-anchor="middle" font-weight="bold">IPE300</text>
<text x="0" y="0" transform="translate(615.0,290.0) rotate(-9.0)" font-size="7" fill="#008000" text-anchor="middle" font-weight="bold">HEA120</text>
<text x="0" y="0" transform="translate(513.0,277.5) rotate(20.0)" font-size="8" fill="#008000" text-anchor="middle" font-weight="bold">IPE300</text>
<text x="0" y="0" transform="translate(456.0,292.0) rotate(17.0)" font-size="7" fill="#008000" text-anchor="middle" font-weight="bold">IPE300</text>
<text x="0" y="0" transform="translate(415.0,301.5) rotate(13.0)" font-size="6" fill="#008000" text-anchor="middle" font-weight="bold">IPE300</text>
<text x="0" y="0" transform="translate(615.0,323.5) rotate(-4.0)" font-size="7" fill="#008000" text-anchor="middle" font-weight="bold">IPE160</text>
<text x="0" y="0" transform="translate(722.5,312.5) rotate(-5.0)" font-size="8" fill="#008000" text-anchor="middle" font-weight="bold">IPE160</text>
<text x="0" y="0" transform="translate(729.0,330.0) rotate(7.0)" font-size="10" fill="#008000" text-anchor="middle" font-weight="bold">Ø10</text>
<text x="0" y="0" transform="translate(765.0,328.0) rotate(-38.0)" font-size="11" fill="#008000" text-anchor="middle" font-weight="bold">Ø10</text>
<text x="0" y="0" transform="translate(831.0,333.0) rotate(37.0)" font-size="9" fill="#008000" text-anchor="middle" font-weight="bold">IPE240</text>
<text x="0" y="0" transform="translate(681.5,357.0) rotate(0.0)" font-size="6.5" fill="#008000" text-anchor="middle" font-weight="bold">IPE160</text>
<text x="0" y="0" transform="translate(786.5,355.5) rotate(0.0)" font-size="7.5" fill="#008000" text-anchor="middle" font-weight="bold">IPE160</text>
<text x="0" y="0" transform="translate(742.0,354.0) rotate(-38.0)" font-size="12" fill="#008000" text-anchor="middle" font-weight="bold">Ø12</text>
<text x="0" y="0" transform="translate(772.0,380.0) rotate(25.0)" font-size="7" fill="#008000" text-anchor="middle" font-weight="bold">Ø10</text>
<text x="0" y="0" transform="translate(698.0,339.0) rotate(35.0)" font-size="6" fill="#008000" text-anchor="middle" font-weight="bold">IPE240</text>
<text x="0" y="0" transform="translate(709.0,335.0) rotate(83.0)" font-size="12" fill="#008000" text-anchor="middle" font-weight="bold">HEB220</text>
<text x="0" y="0" transform="translate(801.0,376.0) rotate(83.0)" font-size="10" fill="#008000" text-anchor="middle" font-weight="bold">HEB220</text>
<text x="0" y="0" transform="translate(666.5,373.8) rotate(88.0)" font-size="7.5" fill="#008000" text-anchor="middle" font-weight="bold">HEB240</text>
<text x="0" y="0" transform="translate(861.0,395.0) rotate(87.0)" font-size="6.5" fill="#008000" text-anchor="middle" font-weight="bold">HEB220</text>
<text x="0" y="0" transform="translate(553.6,322.8) rotate(90.0)" font-size="12.5" fill="#008000" text-anchor="middle" font-weight="bold">HEB220</text>
<text x="0" y="0" transform="translate(578.5,373.8) rotate(90.0)" font-size="6" fill="#008000" text-anchor="middle" font-weight="bold">HEB240</text>
<text x="0" y="0" transform="translate(513.5,371.0) rotate(-90.0)" font-size="6" fill="#008000" text-anchor="middle" font-weight="bold">HEB240</text>
<text x="0" y="0" transform="translate(389.5,405.0) rotate(-90.0)" font-size="9" fill="#008000" text-anchor="middle" font-weight="bold">HEB220</text>
<text x="0" y="0" transform="translate(334.0,396.0) rotate(-90.0)" font-size="7" fill="#008000" text-anchor="middle" font-weight="bold">HEB220</text>
<text x="0" y="0" transform="translate(225.5,412.5) rotate(-87.0)" font-size="11" fill="#008000" text-anchor="middle" font-weight="bold">HEB240</text>
<text x="0" y="0" transform="translate(206.5,400.0) rotate(-87.0)" font-size="8" fill="#008000" text-anchor="middle" font-weight="bold">HEB240</text>
<text x="0" y="0" transform="translate(274.0,331.0) rotate(-88.0)" font-size="12" fill="#008000" text-anchor="middle" font-weight="bold">HEB220</text>
<text x="0" y="0" transform="translate(232.0,281.0) rotate(-85.0)" font-size="11" fill="#008000" text-anchor="middle" font-weight="bold">HEB240</text>
<text x="0" y="0" transform="translate(210.5,305.0) rotate(-86.0)" font-size="7" fill="#008000" text-anchor="middle" font-weight="bold">HEB240</text>
<text x="0" y="0" transform="translate(197.5,317.5) rotate(-86.0)" font-size="5" fill="#008000" text-anchor="middle" font-weight="bold">HEB240</text>
<text x="0" y="0" transform="translate(256.5,287.0) rotate(-80.0)" font-size="11" fill="#008000" text-anchor="middle" font-weight="bold">Ø12</text>
<text x="0" y="0" transform="translate(258.0,290.0) rotate(-84.0)" font-size="11" fill="#008000" text-anchor="middle" font-weight="bold" fill-opacity="0.7">Ø12</text>
<text x="0" y="0" transform="translate(339.0,255.5) rotate(-0.5)" font-size="10.5" fill="#008000" text-anchor="middle" font-weight="bold">IPE300</text>
<text x="0" y="0" transform="translate(304.0,277.0) rotate(-0.5)" font-size="8.5" fill="#008000" text-anchor="middle" font-weight="bold">IPE300</text>
<text x="0" y="0" transform="translate(280.0,291.5) rotate(-0.5)" font-size="7.5" fill="#008000" text-anchor="middle" font-weight="bold">IPE300</text>
<text x="0" y="0" transform="translate(263.0,301.5) rotate(-0.5)" font-size="6.5" fill="#008000" text-anchor="middle" font-weight="bold">IPE300</text>
<text x="0" y="0" transform="translate(348.0,222.5) rotate(1.0)" font-size="11.2" fill="#008000" text-anchor="middle" font-weight="bold">IPE300</text>
<text x="0" y="0" transform="translate(320.5,350.0) rotate(0.0)" font-size="9" fill="#008000" text-anchor="middle" font-weight="bold">IPE270</text>
<text x="0" y="0" transform="translate(286.0,358.0) rotate(0.0)" font-size="5.5" fill="#008000" text-anchor="middle" font-weight="bold">E270</text>
<text x="0" y="0" transform="translate(253.0,184.0) rotate(-61.2)" font-size="11" fill="#008000" text-anchor="middle" font-weight="bold">HEA120</text>
<text x="0" y="0" transform="translate(247.0,299.0) rotate(0.0)" font-size="5" fill="#008000" text-anchor="middle" font-weight="bold">IPE300</text>
<text x="0" y="0" transform="translate(232.0,307.0) rotate(0.0)" font-size="4.5" fill="#008000" text-anchor="middle" font-weight="bold">IPE300</text>
<path d="M39.7 581 L39.7 557" stroke="#1414ff" stroke-width="1.3" fill="none"/>
<path d="M39.7 549 L36.9 557.6 L42.5 557.6 Z" fill="#1414ff"/>
<path d="M39.7 581 L57 579" stroke="#6a2a1a" stroke-width="1.4"/><path d="M51 577.2 L54 575.6 L57.6 578.8 L54.5 581.4 Z" fill="#5a1e14"/>
<path d="M39.7 581.2 L62 582.2" stroke="#12c812" stroke-width="1.1"/><path d="M65 582.3 L58.5 580.2 L58.5 584.4 Z" fill="#12b412"/>
<text x="0" y="0" transform="translate(39.8,545.0) rotate(0.0)" font-size="10" fill="#1414ff" text-anchor="middle" font-weight="bold">Z</text>
<text x="0" y="0" transform="translate(62.3,580.6) rotate(0.0)" font-size="9.5" fill="#d81818" text-anchor="middle" font-weight="bold">X</text>
<text x="0" y="0" transform="translate(70.9,585.0) rotate(0.0)" font-size="9.5" fill="#18d818" text-anchor="middle" font-weight="bold">Y</text>
</svg>
<!-- dialog -->
<div id="dlg" class="abs">
 <div class="c abs"></div>
 <div class="t abs" id="dt">Properties - U.L.S. Checks</div>
 <div class="rb abs" style="left:5.3px;top:25.4px;"></div>
 <div class="abs" style="left:7.9px;top:28px;width:4.4px;height:4.4px;border-radius:50%;background:#222;"></div>
 <div class="lbl abs" id="l1" style="left:17.3px;top:24.6px;font-weight:bold;letter-spacing:-0.056px;">At the worst point</div>
 <div class="abs" style="left:16px;top:25.3px;width:76px;height:11.6px;border:1px dotted #333;box-sizing:border-box;"></div>
 <div class="rb abs" style="left:5.3px;top:41.4px;"></div>
 <div class="lbl abs" id="l2" style="left:17.3px;top:40.6px;letter-spacing:0.038px;">At the indicated point</div>
</div>
<!-- info panel -->
<div id="info" class="abs">
 <div class="h abs"></div>
 <div class="t abs" id="i1" style="left:3.6px;top:4px;font-weight:bold;color:#111;letter-spacing:0.262px;">Bar N32/N38: L. 4.849 m</div>
 <div class="t abs" id="i2" style="left:6.6px;top:23.3px;letter-spacing:-0.161px;">Layer : Steel bars</div>
 <div class="sep abs" style="top:37px;"></div>
 <div class="t abs" id="i3" style="left:6.6px;top:44.1px;letter-spacing:-0.029px;">IPE200 (S275 (EN 1993-1-1))</div>
 <div class="sep abs" style="top:58px;"></div>
 <div class="t abs" id="i4" style="left:21.6px;top:65.4px;letter-spacing:0.109px;">D/C ratio : 29.07 %</div>
 <div class="t abs" id="i5" style="left:6.6px;top:78.7px;letter-spacing:-0.1px;"><b style="color:#111">X:</b> 4.849 m</div>
 <div class="sep abs" style="top:93px;"></div>
 <div class="t abs" id="i6" style="left:21.6px;top:100.7px;color:#1a1aee;letter-spacing:0.126px;">Click to obtain the report of all the checks that</div>
 <div class="t abs" id="i7" style="left:21.6px;top:113.7px;color:#1a1aee;letter-spacing:0.005px;">have been carried out.</div>
</div>
<svg width="1024" height="621" viewBox="0 0 1024 621" style="pointer-events:none" font-family="Liberation Sans, sans-serif">
<!-- toolbar icons -->
<rect x="4.5" y="54.5" width="16" height="16.5" fill="#cce4f7" stroke="#9ccaee" stroke-width="0.6"/>
<g fill="none" stroke="#4d8fa8" stroke-width="0.8"><path d="M11.6 40.8 V47 L7.4 50.2 M11.6 47 L17.2 49.8"/></g>
<g stroke="#3c4a55" stroke-width="0.8" stroke-linejoin="round"><path d="M7 58.2 L12.2 56.6 L17.2 58.2 L17.2 66 L12.2 68.6 L7 66 Z" fill="#b8dcf4"/><path d="M12.2 59.6 L12.2 68.6 M7 58.2 L12.2 59.6 L17.2 58.2" fill="none"/><path d="M12.2 59.6 L17.2 58.2 L17.2 66 L12.2 68.6 Z" fill="#8cc0e6"/></g>
<g fill="none" stroke="#222" stroke-width="0.8"><ellipse cx="12" cy="80.8" rx="5.6" ry="2.4"/><path d="M13.5 83.8 L15.3 83 L13.6 82" /></g><circle cx="12.4" cy="78.8" r="2.6" fill="#111"/>
<g fill="none" stroke="#222" stroke-width="0.8"><ellipse cx="12.4" cy="99.4" rx="5.4" ry="2.2"/><circle cx="12.4" cy="94.6" r="1.2"/><path d="M12.4 95.8 V101.5"/><path d="M13.2 102.6 L15 101.8 L13.4 100.6"/></g>
<rect x="5" y="109" width="14.5" height="0.8" fill="#d4d4d4"/>
<g stroke-width="0.8"><rect x="7.2" y="116.8" width="5" height="10" fill="#a8d0f0" stroke="#333"/><rect x="12.2" y="116.8" width="4.6" height="10" fill="#f4b0b0" stroke="#d03030"/><path d="M12.2 115.5 V128" stroke="#222" stroke-dasharray="1.5 1"/></g>
<g stroke-width="0.8"><path d="M7.2 133.8 H16.8 V143.6 H7.2 Z" fill="#a8d0f0" stroke="#333"/><path d="M7.2 133.8 H16.8 L7.2 143.6 Z" fill="#5be05b" stroke="none"/><path d="M6.4 144.4 L17.8 132.8" stroke="#222" stroke-dasharray="1.5 1"/><path d="M7.2 133.8 H16.8 V143.6 H7.2 Z" fill="none" stroke="#333"/></g>
<g stroke-width="0.9"><rect x="7.4" y="151.6" width="9.4" height="9" fill="#b0c4f0" stroke="#333"/><rect x="7.8" y="152" width="8.6" height="2" fill="#c8b0e8" stroke="none"/><path d="M6.4 156.2 H17.8" stroke="#222" stroke-dasharray="1.5 1"/></g>
<g stroke="#444" stroke-width="0.6"><path d="M6.6 170 L12 167.6 L17.6 170 L12 172.4 Z" fill="#f0a0a0"/><path d="M6.6 170 V177 L12 179.6 V172.4 Z" fill="#9cc4ec"/><path d="M17.6 170 V177 L12 179.6 V172.4 Z" fill="#7ccc88"/><path d="M6.6 172.4 L12 174.8 L17.6 172.4 M6.6 174.8 L12 177.2 L17.6 174.8" fill="none"/></g>
<g><path d="M6 191 Q12 185.6 18.4 191 Q12 196.4 6 191 Z" fill="#111"/><circle cx="12.2" cy="191" r="2.1" fill="#eee"/><circle cx="12.2" cy="191" r="1.1" fill="#111"/><path d="M7.6 196.4 L16.8 185.6" stroke="#111" stroke-width="0.8"/></g>
<rect x="5" y="202.4" width="14.5" height="0.8" fill="#d4d4d4"/>
<text x="6.6" y="214.2" font-size="7" font-weight="bold" fill="#333">3D</text>
<g fill="none" stroke="#666" stroke-width="0.9"><circle cx="13.8" cy="216.6" r="3.4" stroke-dasharray="1.5 1"/><circle cx="13.8" cy="216.6" r="1.3" stroke-width="0.6"/></g>
<!-- app icon title -->
<g fill="#fff" stroke="#3a1010" stroke-width="0.7">
<rect x="3.8" y="7.6" width="2.6" height="10.6"/><rect x="8.2" y="7.6" width="6.6" height="5.6"/><rect x="8.2" y="15" width="6.6" height="3.2"/>
<rect x="39.8" y="56.6" width="3.4" height="11.4"/><rect x="44.8" y="56.6" width="6" height="7"/><rect x="44.8" y="65.4" width="6" height="2.6"/>
</g>
<!-- 3D icon -->
<rect x="4" y="23.5" width="11" height="12" fill="#c8201e"/>
<path d="M6.6 33.6 V29.6 L8.2 28.4 V32.4 Z M9.4 33.8 V27.2 L11.8 26.2 V33.8 Z" fill="#dcdcdc" stroke="#f4f4f4" stroke-width="0.5"/><path d="M7 28.6 L9.6 25.8 L12.4 26.6 M8.2 30 L9.4 29.4" fill="none" stroke="#f0e0c0" stroke-width="0.7"/><path d="M8.6 26.4 L9.4 27" stroke="#e8a020" stroke-width="0.8"/>
<!-- title buttons -->
<rect x="964.5" y="9.5" width="7" height="7" fill="none" stroke="#fff" stroke-width="0.85"/>
<path d="M999.3 9.3 L1006.7 16.7 M1006.7 9.3 L999.3 16.7" stroke="#fff" stroke-width="0.95"/>
<g stroke="#e8eef6" stroke-width="0.9" fill="none">
<path d="M937.5 25.8 L932 30 L937.5 34.2 Z"/><path d="M952.5 25.8 L958 30 L952.5 34.2 Z"/>
<path d="M969.5 30 L976.8 30"/>
<path d="M988.5 28 H994 V33.5 H988.5 Z M990.3 28 V26.3 H995.8 V31.6 H994"/>
<path d="M1007.3 26.3 L1014.3 33.5 M1014.3 26.3 L1007.3 33.5"/>
</g>
<!-- dialog buttons -->
<rect x="189.3" y="59.3" width="6.4" height="6.4" fill="none" stroke="#fff" stroke-width="0.9"/>
<path d="M223.8 59.2 L230.6 66 M230.6 59.2 L223.8 66" stroke="#fff" stroke-width="1.1"/>
<!-- check + info icon -->
<path d="M795.2 106.5 L797.5 110 L801.2 103.8" stroke="#108a10" stroke-width="1.5" fill="none"/>
<circle cx="798.8" cy="142" r="5.3" fill="#1f7fe0"/><rect x="798" y="140.8" width="1.7" height="4.4" fill="#fff"/><rect x="798" y="138.2" width="1.7" height="1.7" fill="#fff"/>
</svg>
</body></html>
